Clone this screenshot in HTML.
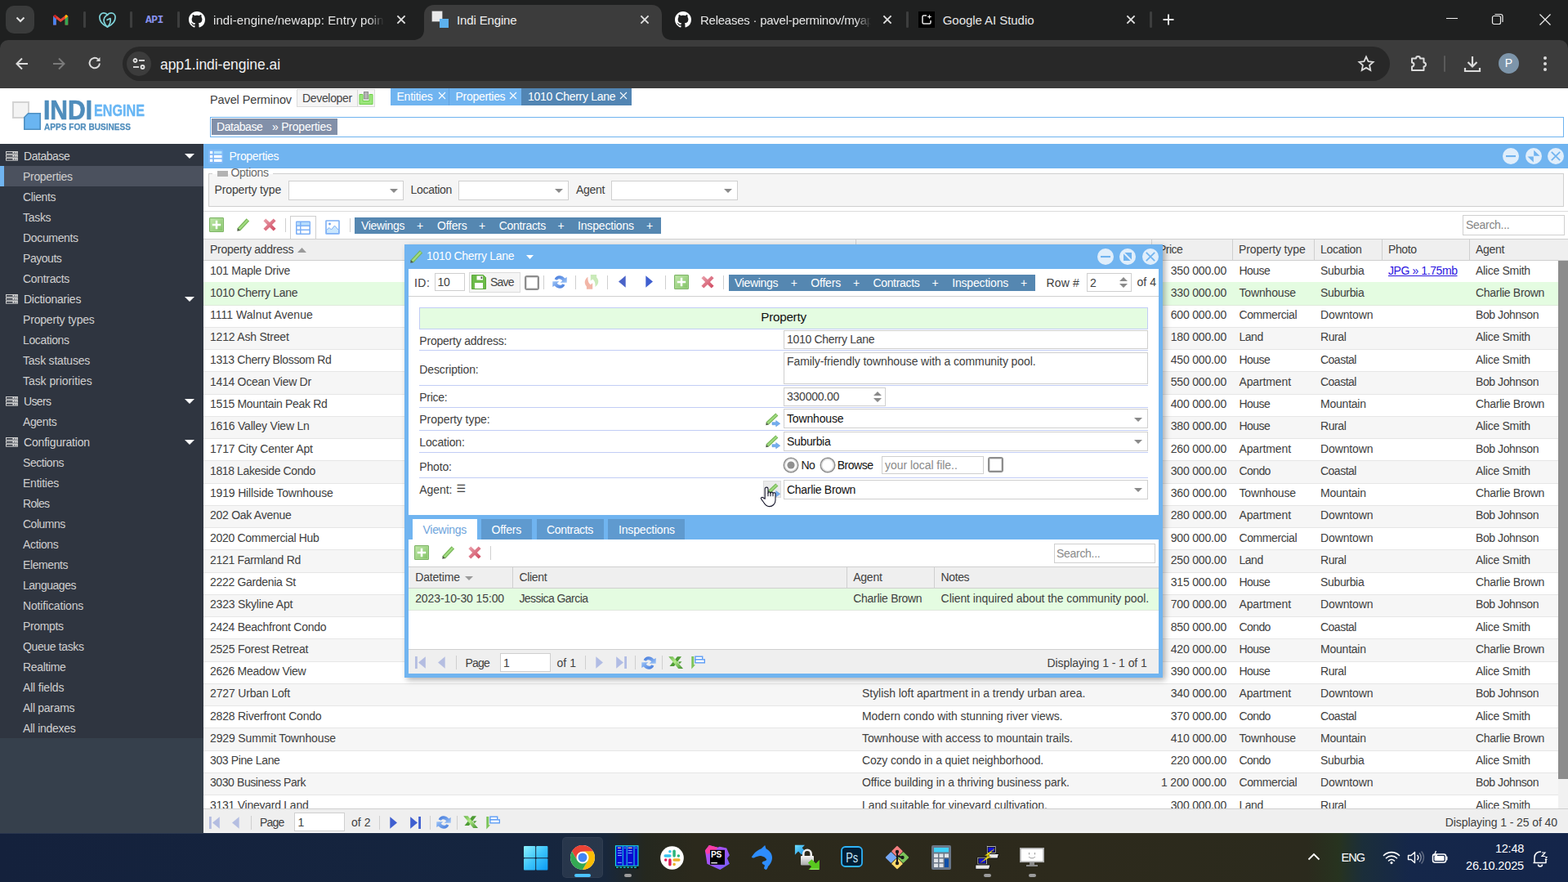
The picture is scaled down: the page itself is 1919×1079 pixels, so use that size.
<!DOCTYPE html>
<html lang="en">
<head>
<meta charset="utf-8">
<title>Indi Engine</title>
<style>
html,body{margin:0;padding:0}
body{width:1919px;height:1079px;overflow:hidden;background:#fff;position:relative;font-family:"Liberation Sans",sans-serif;font-size:14px;color:#404040}
.a{position:absolute}
.t{white-space:pre}
svg{display:block;overflow:visible}
</style>
</head>
<body>
<!-- Browser chrome -->
<div class="a" style="left:0;top:0;width:1919px;height:108px;background:#1f2020"></div>
<div class="a" style="left:0;top:49px;width:1919px;height:59px;background:#3c3c3c;border-radius:10px 10px 0 0"></div>
<div class="a" style="left:7px;top:7px;width:35px;height:34px;background:#3a3b3b;border-radius:10px"></div>
<svg class="a" style="left:17px;top:17px" width="16" height="14" viewBox="0 0 16 14"><path d="M3.5 4.5L8 9l4.5-4.5" stroke="#e3e3e3" stroke-width="2" fill="none"/></svg>
<svg class="a" style="left:64.800px;top:16.500px" width="18.400" height="14.500" viewBox="0 0 20 16"><path d="M0 15V3l2.5-2L10 7l7.5-6L20 3v12h-4V6.5L10 11 4 6.5V15z" fill="#ea4335"/><path d="M0 3v12h4V6.5z" fill="#4285f4"/><path d="M20 3v12h-4V6.5z" fill="#34a853"/><path d="M16 6.5L20 3 17.5 1 16 2.2z" fill="#fbbc04"/><path d="M4 6.5L0 3l2.500-2L4 2.200z" fill="#c5221f"/></svg>
<div class="a" style="left:102px;top:13.500px;width:2.600px;height:20px;background:#3d3e3e;border-radius:1.300px"></div>
<div class="a" style="left:159px;top:13.500px;width:2.600px;height:20px;background:#3d3e3e;border-radius:1.300px"></div>
<div class="a" style="left:217px;top:13.500px;width:2.600px;height:20px;background:#3d3e3e;border-radius:1.300px"></div>
<div class="a" style="left:1109px;top:13.500px;width:2.600px;height:20px;background:#3d3e3e;border-radius:1.300px"></div>
<div class="a" style="left:1407px;top:13.500px;width:2.600px;height:20px;background:#3d3e3e;border-radius:1.300px"></div>
<svg class="a" style="left:120.500px;top:14.500px" width="21" height="19" viewBox="0 0 21 19"><g fill="none" stroke="#7fd3d9" stroke-width="1.700" stroke-linejoin="round" stroke-linecap="round"><path d="M10.500 18C5 15.500 .9 11 .9 6.300C.9 3 3.300 .9 6 .9C8 .9 9.600 1.900 10.500 3.300C11.400 1.900 13 .9 15 .9C17.700 .9 20.100 3 20.100 6.300C20.100 11 16 15.500 10.500 18z"/><path d="M10.500 3.300C7.500 4.500 5.300 8 6.300 11.500C7 14 8.800 16.500 10.500 18C13.500 15 14.800 11.500 14 7.500L10.200 9.300"/></g></svg>
<div class="a" style="left:178px;top:17px;width:24px;height:16px;line-height:16px;font:bold 13px 'Liberation Mono',monospace;color:#8a93f0;letter-spacing:-0.5px">API</div>
<svg class="a" style="left:231px;top:14px" width="20" height="20" viewBox="0 0 16 16"><path fill="#fff" d="M8 0C3.58 0 0 3.58 0 8c0 3.54 2.29 6.53 5.47 7.59.4.07.55-.17.55-.38 0-.19-.01-.82-.01-1.49-2.01.37-2.53-.49-2.69-.94-.09-.23-.48-.94-.82-1.13-.28-.15-.68-.52-.01-.53.63-.01 1.08.58 1.23.82.72 1.21 1.87.87 2.33.66.07-.52.28-.87.51-1.07-1.78-.2-3.64-.89-3.64-3.95 0-.87.31-1.59.82-2.15-.08-.2-.36-1.02.08-2.12 0 0 .67-.21 2.2.82.64-.18 1.32-.27 2-.27s1.36.09 2 .27c1.53-1.04 2.2-.82 2.2-.82.44 1.1.16 1.92.08 2.12.51.56.82 1.27.82 2.15 0 3.07-1.87 3.75-3.65 3.95.29.25.54.73.54 1.48 0 1.07-.01 1.93-.01 2.2 0 .21.15.46.55.38A8.01 8.01 0 0 0 16 8c0-4.42-3.58-8-8-8z"/></svg>
<div class="a t" style="top:15px;line-height:20px;letter-spacing:0.092px;font-size:15px;color:#e6e6e6;left:261px;width:210px;overflow:hidden;-webkit-mask-image:linear-gradient(90deg,#000 190px,transparent 209px);mask-image:linear-gradient(90deg,#000 190px,transparent 209px);">indi-engine/newapp: Entry point</div>
<svg class="a" style="left:483px;top:16px" width="16" height="16" viewBox="-8 -8 16 16"><path d="M-4.6 -4.6L4.6 4.6M4.6 -4.6L-4.6 4.6" stroke="#e3e3e3" stroke-width="1.8" fill="none"/></svg>
<svg class="a" style="left:505px;top:6px" width="318" height="43" viewBox="0 0 318 43"><path d="M0 43C9 43 14 38 14 30V12C14 5 19 0 26 0H293C300 0 305 5 305 12V30C305 38 309 43 318 43z" fill="#3c3c3c"/></svg>
<div class="a" style="left:529px;top:14px;width:12px;height:12px;background:#e9e9e9;box-shadow:0 0 0 0.5px #bbb"></div>
<div class="a" style="left:538px;top:23px;width:11px;height:11px;background:#5db1ee"></div>
<div class="a t" style="top:15px;line-height:20px;letter-spacing:-0.142px;font-size:15px;color:#f0f0f0;left:559px;">Indi Engine</div>
<svg class="a" style="left:781px;top:16px" width="16" height="16" viewBox="-8 -8 16 16"><path d="M-4.6 -4.6L4.6 4.6M4.6 -4.6L-4.6 4.6" stroke="#e3e3e3" stroke-width="1.8" fill="none"/></svg>
<svg class="a" style="left:826px;top:14px" width="20" height="20" viewBox="0 0 16 16"><path fill="#fff" d="M8 0C3.58 0 0 3.58 0 8c0 3.54 2.29 6.53 5.47 7.59.4.07.55-.17.55-.38 0-.19-.01-.82-.01-1.49-2.01.37-2.53-.49-2.69-.94-.09-.23-.48-.94-.82-1.13-.28-.15-.68-.52-.01-.53.63-.01 1.08.58 1.23.82.72 1.21 1.87.87 2.33.66.07-.52.28-.87.51-1.07-1.78-.2-3.64-.89-3.64-3.95 0-.87.31-1.59.82-2.15-.08-.2-.36-1.02.08-2.12 0 0 .67-.21 2.2.82.64-.18 1.32-.27 2-.27s1.36.09 2 .27c1.53-1.04 2.2-.82 2.2-.82.44 1.1.16 1.92.08 2.12.51.56.82 1.27.82 2.15 0 3.07-1.87 3.75-3.65 3.95.29.25.54.73.54 1.48 0 1.07-.01 1.93-.01 2.2 0 .21.15.46.55.38A8.01 8.01 0 0 0 16 8c0-4.42-3.58-8-8-8z"/></svg>
<div class="a t" style="top:15px;line-height:20px;letter-spacing:-0.245px;font-size:15px;color:#e6e6e6;left:857px;width:210px;overflow:hidden;-webkit-mask-image:linear-gradient(90deg,#000 190px,transparent 209px);mask-image:linear-gradient(90deg,#000 190px,transparent 209px);">Releases · pavel-perminov/myapp</div>
<svg class="a" style="left:1078px;top:16px" width="16" height="16" viewBox="-8 -8 16 16"><path d="M-4.6 -4.6L4.6 4.6M4.6 -4.6L-4.6 4.6" stroke="#e3e3e3" stroke-width="1.8" fill="none"/></svg>
<div class="a" style="left:1124px;top:14px;width:20px;height:20px;background:#000"></div>
<svg class="a" style="left:1124px;top:14px" width="20" height="20" viewBox="0 0 20 20"><path d="M10 5H6.500C5.500 5 5 5.500 5 6.500v7c0 1 .5 1.500 1.500 1.500h7c1 0 1.500-.5 1.500-1.500V11" fill="none" stroke="#e8e8e8" stroke-width="1.500"/><path d="M13.500 3.500l.8 2.200 2.200.8-2.200.8-.8 2.200-.8-2.200-2.200-.8 2.200-.8z" fill="#e8e8e8"/></svg>
<div class="a t" style="top:15px;line-height:20px;letter-spacing:-0.053px;font-size:15px;color:#e6e6e6;left:1153.75px;">Google AI Studio</div>
<svg class="a" style="left:1376px;top:16px" width="16" height="16" viewBox="-8 -8 16 16"><path d="M-4.6 -4.6L4.6 4.6M4.6 -4.6L-4.6 4.6" stroke="#e3e3e3" stroke-width="1.8" fill="none"/></svg>
<svg class="a" style="left:1422px;top:16px" width="16" height="16" viewBox="0 0 16 16"><path d="M8 1.500v13M1.500 8h13" stroke="#e3e3e3" stroke-width="2"/></svg>
<div class="a" style="left:1770px;top:22px;width:14px;height:1px;background:#f0f0f0"></div>
<svg class="a" style="left:1825px;top:16px" width="16" height="16" viewBox="0 0 16 16"><rect x="1.500" y="3.500" width="10" height="10" rx="2" fill="none" stroke="#f0f0f0" stroke-width="1.200"/><path d="M4.500 1.500H11.500Q14 1.500 14 4V11" fill="none" stroke="#f0f0f0" stroke-width="1.200"/></svg>
<svg class="a" style="left:1883px;top:16px" width="16" height="16" viewBox="0 0 16 16"><path d="M1.500 1.500l13 13M14.500 1.500l-13 13" stroke="#f0f0f0" stroke-width="1.200"/></svg>
<svg class="a" style="left:17px;top:68px" width="20" height="20" viewBox="0 0 20 20"><path d="M17 10H3.500M10 3.500L3.500 10l6.500 6.500" stroke="#dcdcdc" stroke-width="2" fill="none"/></svg>
<svg class="a" style="left:62px;top:68px" width="20" height="20" viewBox="0 0 20 20"><path d="M3 10h13.500M10 3.500l6.500 6.500-6.500 6.500" stroke="#7a7a7a" stroke-width="2" fill="none"/></svg>
<svg class="a" style="left:106px;top:67px" width="20" height="20" viewBox="0 0 20 20"><path d="M16 10.500a6.200 6.200 0 1 1-2-5" stroke="#dcdcdc" stroke-width="2" fill="none"/><path d="M16.500 3v5h-5z" fill="#dcdcdc"/></svg>
<div class="a" style="left:150px;top:57px;width:1551px;height:42px;background:#282828;border-radius:21px"></div>
<div class="a" style="left:155px;top:63px;width:30px;height:30px;background:#3c3c3c;border-radius:15px"></div>
<svg class="a" style="left:161px;top:69px" width="18" height="18" viewBox="0 0 18 18"><g stroke="#e3e3e3" stroke-width="1.800" fill="none"><circle cx="4.500" cy="5" r="2"/><path d="M9 5h7"/><circle cx="13.500" cy="13" r="2"/><path d="M2 13h7"/></g></svg>
<div class="a t" style="top:67px;line-height:24px;letter-spacing:-0.048px;font-size:17.5px;color:#f1f1f1;left:196px;">app1.indi-engine.ai</div>
<svg class="a" style="left:1661px;top:67px" width="22" height="22" viewBox="0 0 22 22"><path d="M11 2.500l2.600 5.600 6 .7-4.500 4.100 1.200 6-5.300-3-5.300 3 1.200-6L2.400 8.800l6-.7z" fill="none" stroke="#dcdcdc" stroke-width="1.800" stroke-linejoin="miter"/></svg>
<svg class="a" style="left:1724px;top:66px" width="24" height="24" viewBox="0 0 24 24"><path d="M4 5.500h5a2.500 2.500 0 0 1 5 0h4.500v5a2.500 2.500 0 0 1 0 5V20H4v-4.500a2.500 2.500 0 0 0 0-5z" fill="none" stroke="#dcdcdc" stroke-width="2" stroke-linejoin="round"/></svg>
<div class="a" style="left:1767px;top:68px;width:2px;height:20px;background:#5a5a5a;border-radius:1px"></div>
<svg class="a" style="left:1790px;top:66px" width="24" height="24" viewBox="0 0 24 24"><path d="M12 3v12M6.500 10l5.500 5.500 5.500-5.500M3 17v4h18v-4" fill="none" stroke="#dcdcdc" stroke-width="2.200"/></svg>
<div class="a" style="left:1834px;top:65px;width:25px;height:25px;border-radius:13px;background:#7d95aa;color:#fff;font-size:14px;line-height:25px;text-align:center">P</div>
<div class="a" style="left:1889px;top:69px;width:4px;height:4px;border-radius:2px;background:#dcdcdc"></div>
<div class="a" style="left:1889px;top:76px;width:4px;height:4px;border-radius:2px;background:#dcdcdc"></div>
<div class="a" style="left:1889px;top:83px;width:4px;height:4px;border-radius:2px;background:#dcdcdc"></div>
<!-- App header -->
<div class="a" style="left:15px;top:124px;width:17px;height:17px;border:2px solid #d3d3d3;background:#f3f3f3"></div>
<svg class="a" style="left:29px;top:138px" width="21" height="21" viewBox="0 0 21 21"><path d="M5.500 .8H20.200V20.200H.8V5.500z" fill="#6ab5f1" stroke="#4f90c2" stroke-width="1.600"/></svg>
<div class="a" style="left:53.4px;top:118.03px;font-size:33.52px;line-height:33.52px;font-weight:bold;color:#4f8dbc;white-space:nowrap;transform-origin:0 0;transform:scaleX(0.8955);-webkit-text-stroke:0.7px #4f8dbc">INDI</div>
<div class="a" style="left:114.9px;top:124.88px;font-size:20.11px;line-height:20.11px;font-weight:bold;color:#68b6f4;white-space:nowrap;transform-origin:0 0;transform:scaleX(0.8041);-webkit-text-stroke:0.4px #68b6f4">ENGINE</div>
<div class="a" style="left:53.8px;top:149.84px;font-size:11.17px;line-height:11.17px;font-weight:bold;color:#4f8dbc;white-space:nowrap;transform-origin:0 0;transform:scaleX(0.9047);-webkit-text-stroke:0.25px #4f8dbc">APPS FOR BUSINESS</div>
<div class="a t" style="top:112px;line-height:20px;letter-spacing:-0.11px;font-size:14.5px;left:257px;">Pavel Perminov</div>
<div class="a" style="left:363px;top:109px;width:96px;height:22px;border:1px solid #dcdcdc;background:#f5f5f5;box-sizing:border-box"></div>
<div class="a" style="left:437px;top:110px;width:1px;height:20px;background:#d6d6d6"></div>
<div class="a t" style="top:111px;line-height:18px;letter-spacing:-0.33px;color:#444;left:370px;">Developer</div>
<svg class="a" style="left:439px;top:111px" width="18" height="18" viewBox="0 0 18 18"><path d="M1 4.500h4v8h8v-8h4V16.500H1z" fill="#9be57c" stroke="#6fd048" stroke-width="1"/><rect x="6.500" y="1.500" width="5" height="8.500" fill="#b4b4b4" stroke="#8e8e8e" stroke-width="1"/></svg>
<div class="a" style="left:478px;top:108px;width:160px;height:21px;background:#70b4f0"></div>
<div class="a" style="left:549px;top:108px;width:1px;height:21px;background:#62a3e0"></div>
<div class="a" style="left:638px;top:108px;width:135px;height:21px;background:#5285b3"></div>
<div class="a t" style="top:109px;line-height:18px;letter-spacing:-0.228px;color:#fff;left:485.5px;">Entities</div>
<svg class="a" style="left:534.7px;top:111px" width="12" height="12" viewBox="-6 -6 12 12"><path d="M-4 -4L4 4M4 -4L-4 4" stroke="#fff" stroke-width="1.100" fill="none"/></svg>
<div class="a t" style="top:109px;line-height:18px;letter-spacing:-0.309px;color:#fff;left:557.6px;">Properties</div>
<svg class="a" style="left:622px;top:111px" width="12" height="12" viewBox="-6 -6 12 12"><path d="M-4 -4L4 4M4 -4L-4 4" stroke="#fff" stroke-width="1.100" fill="none"/></svg>
<div class="a t" style="top:109px;line-height:18px;letter-spacing:-0.307px;color:#fff;left:646px;">1010 Cherry Lane</div>
<svg class="a" style="left:757px;top:111px" width="12" height="12" viewBox="-6 -6 12 12"><path d="M-4 -4L4 4M4 -4L-4 4" stroke="#fff" stroke-width="1.100" fill="none"/></svg>
<div class="a" style="left:257px;top:143px;width:1657px;height:25px;border:1px solid #6fb3ef;box-sizing:border-box;background:#fff"></div>
<div class="a" style="left:259px;top:145px;width:154px;height:20px;background:#8290a9"></div>
<div class="a t" style="top:146px;line-height:18px;letter-spacing:-0.447px;color:#fff;left:265px;">Database</div>
<div class="a t" style="top:146px;line-height:18px;letter-spacing:-0.219px;color:#fff;left:333px;">» Properties</div>
<!-- Sidebar -->
<div class="a" style="left:0;top:176px;width:249px;height:727px;background:#2f3540"></div>
<div class="a" style="left:0;top:903px;width:249px;height:117px;background:#36404c"></div>
<svg class="a" style="left:7px;top:184.5px" width="15" height="12" viewBox="0 0 15 12"><g fill="none" stroke="#cfcfcf" stroke-width="1"><rect x=".5" y=".5" width="14" height="2.600"/><rect x=".5" y="4.500" width="14" height="2.600"/><rect x=".5" y="8.500" width="14" height="2.600"/></g><g fill="#e4e4e4"><rect x="8.500" y="1" width="2" height="1.600"/><rect x="11.500" y="1" width="2" height="1.600"/><rect x="8.500" y="5" width="2" height="1.600"/><rect x="11.500" y="5" width="2" height="1.600"/><rect x="8.500" y="9" width="2" height="1.600"/><rect x="11.500" y="9" width="2" height="1.600"/></g></svg>
<div class="a t" style="top:182px;line-height:18px;letter-spacing:-0.447px;color:#d4d4d4;left:29px;">Database</div>
<svg class="a" style="left:226px;top:187.5px" width="12" height="6" viewBox="0 0 12 6"><path d="M0 0H12L6 6z" fill="#fff"/></svg>
<div class="a" style="left:0;top:203px;width:249px;height:25px;background:#4b515e"></div>
<div class="a" style="left:0;top:203px;width:5px;height:25px;background:#70b4f0"></div>
<div class="a t" style="top:207px;line-height:18px;letter-spacing:-0.309px;color:#cfcfcf;left:28px;">Properties</div>
<div class="a t" style="top:232px;line-height:18px;letter-spacing:-0.389px;color:#cfcfcf;left:28px;">Clients</div>
<div class="a t" style="top:257px;line-height:18px;letter-spacing:-0.296px;color:#cfcfcf;left:28px;">Tasks</div>
<div class="a t" style="top:282px;line-height:18px;letter-spacing:-0.339px;color:#cfcfcf;left:28px;">Documents</div>
<div class="a t" style="top:307px;line-height:18px;letter-spacing:-0.462px;color:#cfcfcf;left:28px;">Payouts</div>
<div class="a t" style="top:332px;line-height:18px;letter-spacing:-0.321px;color:#cfcfcf;left:28px;">Contracts</div>
<svg class="a" style="left:7px;top:360px" width="15" height="12" viewBox="0 0 15 12"><g fill="none" stroke="#cfcfcf" stroke-width="1"><rect x=".5" y=".5" width="14" height="2.600"/><rect x=".5" y="4.500" width="14" height="2.600"/><rect x=".5" y="8.500" width="14" height="2.600"/></g><g fill="#e4e4e4"><rect x="8.500" y="1" width="2" height="1.600"/><rect x="11.500" y="1" width="2" height="1.600"/><rect x="8.500" y="5" width="2" height="1.600"/><rect x="11.500" y="5" width="2" height="1.600"/><rect x="8.500" y="9" width="2" height="1.600"/><rect x="11.500" y="9" width="2" height="1.600"/></g></svg>
<div class="a t" style="top:357px;line-height:18px;letter-spacing:-0.25px;color:#d4d4d4;left:29px;">Dictionaries</div>
<svg class="a" style="left:226px;top:363px" width="12" height="6" viewBox="0 0 12 6"><path d="M0 0H12L6 6z" fill="#fff"/></svg>
<div class="a t" style="top:382px;line-height:18px;letter-spacing:-0.186px;color:#cfcfcf;left:28px;">Property types</div>
<div class="a t" style="top:407px;line-height:18px;letter-spacing:-0.361px;color:#cfcfcf;left:28px;">Locations</div>
<div class="a t" style="top:432px;line-height:18px;letter-spacing:-0.213px;color:#cfcfcf;left:28px;">Task statuses</div>
<div class="a t" style="top:457px;line-height:18px;letter-spacing:-0.06px;color:#cfcfcf;left:28px;">Task priorities</div>
<svg class="a" style="left:7px;top:485px" width="15" height="12" viewBox="0 0 15 12"><g fill="none" stroke="#cfcfcf" stroke-width="1"><rect x=".5" y=".5" width="14" height="2.600"/><rect x=".5" y="4.500" width="14" height="2.600"/><rect x=".5" y="8.500" width="14" height="2.600"/></g><g fill="#e4e4e4"><rect x="8.500" y="1" width="2" height="1.600"/><rect x="11.500" y="1" width="2" height="1.600"/><rect x="8.500" y="5" width="2" height="1.600"/><rect x="11.500" y="5" width="2" height="1.600"/><rect x="8.500" y="9" width="2" height="1.600"/><rect x="11.500" y="9" width="2" height="1.600"/></g></svg>
<div class="a t" style="top:482px;line-height:18px;letter-spacing:-0.635px;color:#d4d4d4;left:29px;">Users</div>
<svg class="a" style="left:226px;top:488px" width="12" height="6" viewBox="0 0 12 6"><path d="M0 0H12L6 6z" fill="#fff"/></svg>
<div class="a t" style="top:507px;line-height:18px;letter-spacing:-0.375px;color:#cfcfcf;left:28px;">Agents</div>
<svg class="a" style="left:7px;top:535px" width="15" height="12" viewBox="0 0 15 12"><g fill="none" stroke="#cfcfcf" stroke-width="1"><rect x=".5" y=".5" width="14" height="2.600"/><rect x=".5" y="4.500" width="14" height="2.600"/><rect x=".5" y="8.500" width="14" height="2.600"/></g><g fill="#e4e4e4"><rect x="8.500" y="1" width="2" height="1.600"/><rect x="11.500" y="1" width="2" height="1.600"/><rect x="8.500" y="5" width="2" height="1.600"/><rect x="11.500" y="5" width="2" height="1.600"/><rect x="8.500" y="9" width="2" height="1.600"/><rect x="11.500" y="9" width="2" height="1.600"/></g></svg>
<div class="a t" style="top:532px;line-height:18px;letter-spacing:-0.181px;color:#d4d4d4;left:29px;">Configuration</div>
<svg class="a" style="left:226px;top:538px" width="12" height="6" viewBox="0 0 12 6"><path d="M0 0H12L6 6z" fill="#fff"/></svg>
<div class="a t" style="top:557px;line-height:18px;letter-spacing:-0.452px;color:#cfcfcf;left:28px;">Sections</div>
<div class="a t" style="top:582px;line-height:18px;letter-spacing:-0.228px;color:#cfcfcf;left:28px;">Entities</div>
<div class="a t" style="top:607px;line-height:18px;letter-spacing:-0.674px;color:#cfcfcf;left:28px;">Roles</div>
<div class="a t" style="top:632px;line-height:18px;letter-spacing:-0.503px;color:#cfcfcf;left:28px;">Columns</div>
<div class="a t" style="top:657px;line-height:18px;letter-spacing:-0.354px;color:#cfcfcf;left:28px;">Actions</div>
<div class="a t" style="top:682px;line-height:18px;letter-spacing:-0.406px;color:#cfcfcf;left:28px;">Elements</div>
<div class="a t" style="top:707px;line-height:18px;letter-spacing:-0.478px;color:#cfcfcf;left:28px;">Languages</div>
<div class="a t" style="top:732px;line-height:18px;letter-spacing:-0.16px;color:#cfcfcf;left:28px;">Notifications</div>
<div class="a t" style="top:757px;line-height:18px;letter-spacing:-0.344px;color:#cfcfcf;left:28px;">Prompts</div>
<div class="a t" style="top:782px;line-height:18px;letter-spacing:-0.369px;color:#cfcfcf;left:28px;">Queue tasks</div>
<div class="a t" style="top:807px;line-height:18px;letter-spacing:-0.344px;color:#cfcfcf;left:28px;">Realtime</div>
<div class="a t" style="top:832px;line-height:18px;letter-spacing:-0.185px;color:#cfcfcf;left:28px;">All fields</div>
<div class="a t" style="top:857px;line-height:18px;letter-spacing:-0.285px;color:#cfcfcf;left:28px;">All params</div>
<div class="a t" style="top:882px;line-height:18px;letter-spacing:-0.294px;color:#cfcfcf;left:28px;">All indexes</div>
<!-- Main panel -->
<div class="a" style="left:249px;top:176px;width:1670px;height:30px;background:#70b4f0"></div>
<svg class="a" style="left:255px;top:183px" width="18" height="17" viewBox="0 0 18 17"><rect x=".4" y=".4" width="17.200" height="16.200" rx="1" fill="#7db6f7" stroke="#86bbf6" stroke-width=".8"/><g fill="#fff"><rect x="1.900" y="1.900" width="3.300" height="3.200"/><rect x="6.900" y="1.900" width="9.600" height="3.200" fill="#b6e6fe"/><rect x="1.900" y="6.800" width="3.300" height="3.300"/><rect x="6.900" y="6.800" width="9.600" height="3.300"/><rect x="1.900" y="11.700" width="3.300" height="3.300"/><rect x="6.900" y="11.700" width="9.600" height="3.300"/></g></svg>
<div class="a t" style="top:181px;line-height:20px;letter-spacing:-0.309px;color:#fff;left:280.5px;">Properties</div>
<svg class="a" style="left:1838px;top:180px" width="22" height="22" viewBox="-11 -11 22 22"><circle r="10" fill="#e0eefb"/><rect x="-6" y="-1" width="12" height="2.100" fill="#70b3ef"/></svg>
<svg class="a" style="left:1866px;top:180px" width="22" height="22" viewBox="-11 -11 22 22"><circle r="10" fill="#e0eefb"/><path d="M.2 -7.300L7.500 -.2H.2zM-7.500 .5H-.2V7.600z" fill="#70b3ef"/></svg>
<svg class="a" style="left:1893px;top:180px" width="22" height="22" viewBox="-11 -11 22 22"><circle r="10" fill="#e0eefb"/><path d="M-5.200 -5.200L5.200 5.200M5.200 -5.200L-5.200 5.200" stroke="#70b3ef" stroke-width="1.700" fill="none"/></svg>
<div class="a" style="left:255px;top:212px;width:1659px;height:41px;border:1px solid #cfcfcf;background:#f5f5f5;box-sizing:border-box"></div>
<div class="a" style="left:260px;top:206px;width:74px;height:10px;background:#fff"></div>
<div class="a" style="left:260px;top:213px;width:74px;height:5px;background:#f5f5f5"></div>
<div class="a" style="left:266px;top:209px;width:13px;height:7px;background:#b3b3b3"></div>
<div class="a t" style="top:202px;line-height:18px;letter-spacing:-0.293px;color:#6a6a6a;left:282.5px;">Options</div>
<div class="a t" style="top:223px;line-height:18px;letter-spacing:-0.133px;left:262.5px;">Property type</div>
<div class="a" style="left:353px;top:221px;width:141px;height:24px;border:1px solid #cfcfcf;background:#fff;box-sizing:border-box"></div><svg class="a" style="left:476.5px;top:231px" width="10" height="5" viewBox="0 0 10 5"><path d="M0 0H10L5.0 5z" fill="#8a8a8a"/></svg>
<div class="a t" style="top:223px;line-height:18px;letter-spacing:-0.296px;left:502.5px;">Location</div>
<div class="a" style="left:561px;top:221px;width:135px;height:24px;border:1px solid #cfcfcf;background:#fff;box-sizing:border-box"></div><svg class="a" style="left:678.5px;top:231px" width="10" height="5" viewBox="0 0 10 5"><path d="M0 0H10L5.0 5z" fill="#8a8a8a"/></svg>
<div class="a t" style="top:223px;line-height:18px;letter-spacing:-0.274px;left:705px;">Agent</div>
<div class="a" style="left:748px;top:221px;width:155px;height:24px;border:1px solid #cfcfcf;background:#fff;box-sizing:border-box"></div><svg class="a" style="left:885.5px;top:231px" width="10" height="5" viewBox="0 0 10 5"><path d="M0 0H10L5.0 5z" fill="#8a8a8a"/></svg>
<div class="a" style="left:249px;top:258px;width:1670px;height:1px;background:#dcdcdc"></div>
<svg class="a" style="left:256px;top:266px" width="18" height="18" viewBox="0 0 18 18"><defs><linearGradient id="ga1" x1="0" y1="0" x2="1" y2="1"><stop offset="0" stop-color="#c4eaae"/><stop offset="1" stop-color="#7fc062"/></linearGradient></defs><rect x=".5" y=".5" width="17" height="17" rx=".5" fill="url(#ga1)" stroke="#7db465"/><rect x="1.500" y="1.500" width="15" height="15" fill="none" stroke="#a9d993" stroke-width="1" opacity=".7"/><path d="M9 3.800v10.400M3.800 9h10.400" stroke="#fff" stroke-width="2.500"/></svg>
<svg class="a" style="left:290px;top:267px" width="16" height="16" viewBox="0 0 16 16"><path d="M2.200 13.800L13.400 1.900" stroke="#76b455" stroke-width="4.600" stroke-linecap="butt"/><path d="M2.500 13.500L13.100 2.200" stroke="#a2dc82" stroke-width="2.400"/><path d="M.3 15.700l.4-3.800 3.300 3z" fill="#4c5a44"/></svg>
<svg class="a" style="left:322px;top:267px" width="16" height="16" viewBox="0 0 16 16"><defs><linearGradient id="gd2" x1="0" y1="0" x2="1" y2="1"><stop offset="0" stop-color="#eaa6b0"/><stop offset="1" stop-color="#cf445c"/></linearGradient></defs><path d="M3.300 .4L8 5.100 12.700 .4 15.600 3.300 10.900 8 15.600 12.700 12.700 15.600 8 10.900 3.300 15.600 .4 12.700 5.100 8 .4 3.300z" fill="url(#gd2)"/></svg>
<div class="a" style="left:349px;top:267px;width:1px;height:17px;background:#cfcfcf"></div>
<div class="a" style="left:355px;top:264px;width:32px;height:29px;border:1px solid #cfcfcf;border-bottom:0;background:#fff;box-sizing:border-box"></div>
<svg class="a" style="left:362px;top:270px" width="18" height="18" viewBox="0 0 18 18"><rect x=".8" y="1.300" width="16.400" height="15" rx=".5" fill="#fff" stroke="#7db0f6" stroke-width="1.600"/><rect x="1.600" y="2.100" width="14.800" height="3.800" fill="#b4dcfd"/><path d="M1 6.300h16M1 11.300h16M5.800 1.500v14.500" stroke="#7db0f6" stroke-width="1.500" fill="none"/></svg>
<svg class="a" style="left:398px;top:269px" width="18" height="18" viewBox="0 0 18 18"><rect x="1" y="1" width="16" height="16" rx=".5" fill="#fff" stroke="#7db0f6" stroke-width="1.600"/><path d="M1.500 12.500l3.500-3 2.500 2.500 4-5 5 5.500V16.500H1.500z" fill="#c9e6fd" stroke="#7db0f6" stroke-width="1"/><circle cx="5.500" cy="5" r="1.400" fill="#6fa4f0"/></svg>
<div class="a" style="left:428px;top:267px;width:1px;height:17px;background:#cfcfcf"></div>
<div class="a" style="left:434px;top:266px;width:374.5px;height:20px;background:#5587b1"></div><div class="a t" style="top:266px;line-height:20px;letter-spacing:-0.32px;color:#fff;left:442px;">Viewings</div><div class="a t" style="top:266px;line-height:20px;letter-spacing:1.786px;color:#fff;left:510.013px;">+</div><div class="a t" style="top:266px;line-height:20px;letter-spacing:-0.207px;color:#fff;left:535px;">Offers</div><div class="a t" style="top:266px;line-height:20px;letter-spacing:1.786px;color:#fff;left:586.013px;">+</div><div class="a t" style="top:266px;line-height:20px;letter-spacing:-0.321px;color:#fff;left:610.8px;">Contracts</div><div class="a t" style="top:266px;line-height:20px;letter-spacing:1.786px;color:#fff;left:682.513px;">+</div><div class="a t" style="top:266px;line-height:20px;letter-spacing:-0.174px;color:#fff;left:707px;">Inspections</div><div class="a t" style="top:266px;line-height:20px;letter-spacing:1.786px;color:#fff;left:791.013px;">+</div>
<div class="a" style="left:1790px;top:263px;width:125px;height:25px;border:1px solid #cfcfcf;background:#fff;box-sizing:border-box"></div>
<div class="a t" style="top:266px;line-height:18px;letter-spacing:-0.294px;color:#858585;left:1794px;">Search...</div>
<div class="a" style="left:249px;top:292px;width:1670px;height:27px;background:#efefef;border-top:1px solid #cfcfcf;border-bottom:1px solid #cfcfcf;box-sizing:border-box"></div>
<div class="a t" style="top:296px;line-height:18px;letter-spacing:-0.282px;left:257px;">Property address</div>
<div class="a" style="left:1047px;top:293px;width:1px;height:25px;background:#cfcfcf"></div>
<div class="a t" style="top:296px;line-height:18px;letter-spacing:-0.24px;left:1055px;">Description</div>
<div class="a" style="left:1409px;top:293px;width:1px;height:25px;background:#cfcfcf"></div>
<div class="a t" style="top:296px;line-height:18px;letter-spacing:-0.548px;left:1418px;">Price</div>
<div class="a" style="left:1508px;top:293px;width:1px;height:25px;background:#cfcfcf"></div>
<div class="a t" style="top:296px;line-height:18px;letter-spacing:-0.133px;left:1516px;">Property type</div>
<div class="a" style="left:1608px;top:293px;width:1px;height:25px;background:#cfcfcf"></div>
<div class="a t" style="top:296px;line-height:18px;letter-spacing:-0.296px;left:1616px;">Location</div>
<div class="a" style="left:1691px;top:293px;width:1px;height:25px;background:#cfcfcf"></div>
<div class="a t" style="top:296px;line-height:18px;letter-spacing:-0.387px;left:1699px;">Photo</div>
<div class="a" style="left:1798px;top:293px;width:1px;height:25px;background:#cfcfcf"></div>
<div class="a t" style="top:296px;line-height:18px;letter-spacing:-0.274px;left:1806px;">Agent</div>
<svg class="a" style="left:364px;top:302.500px" width="11" height="6" viewBox="0 0 11 6"><path d="M0 6H11L5.500 0z" fill="#9a9a9a"/></svg>
<div class="a" style="left:249px;top:319px;width:1658px;height:670px;overflow:hidden;background:#fff">
<div class="a" style="left:0;top:0px;width:1658px;height:27px;background:#fff;border-bottom:1px solid #e6e6e6;box-sizing:border-box"></div>
<div class="a t" style="top:3px;line-height:18px;letter-spacing:-0.256px;left:8px;">101 Maple Drive</div>
<div class="a t" style="top:3px;line-height:18px;letter-spacing:-0.18px;left:1183.72px;">350 000.00</div>
<div class="a t" style="top:3px;line-height:18px;letter-spacing:-0.556px;left:1267.5px;">House</div>
<div class="a t" style="top:3px;line-height:18px;letter-spacing:-0.339px;left:1367px;">Suburbia</div>
<div class="a t" style="top:3px;line-height:18px;letter-spacing:-0.415px;color:#2a14e0;left:1450px;text-decoration:underline;">JPG » 1.75mb</div>
<div class="a t" style="top:3px;line-height:18px;letter-spacing:-0.294px;left:1557px;">Alice Smith</div>
<div class="a" style="left:0;top:26px;width:1658px;height:29px;background:#e4fce1;border-bottom:1px solid #dfeadb;box-sizing:border-box"></div>
<div class="a t" style="top:30px;line-height:18px;letter-spacing:-0.307px;left:8px;">1010 Cherry Lane</div>
<div class="a t" style="top:30px;line-height:18px;letter-spacing:-0.079px;left:806px;">Family-friendly townhouse with a community pool.</div>
<div class="a t" style="top:30px;line-height:18px;letter-spacing:-0.18px;left:1183.72px;">330 000.00</div>
<div class="a t" style="top:30px;line-height:18px;letter-spacing:-0.16px;left:1267.5px;">Townhouse</div>
<div class="a t" style="top:30px;line-height:18px;letter-spacing:-0.339px;left:1367px;">Suburbia</div>
<div class="a t" style="top:30px;line-height:18px;letter-spacing:-0.298px;left:1557px;">Charlie Brown</div>
<div class="a" style="left:0;top:55px;width:1658px;height:27px;background:#fff;border-bottom:1px solid #e6e6e6;box-sizing:border-box"></div>
<div class="a t" style="top:57px;line-height:18px;letter-spacing:0.027px;left:8px;">1111 Walnut Avenue</div>
<div class="a t" style="top:57px;line-height:18px;letter-spacing:-0.18px;left:1183.72px;">600 000.00</div>
<div class="a t" style="top:57px;line-height:18px;letter-spacing:-0.406px;left:1267.5px;">Commercial</div>
<div class="a t" style="top:57px;line-height:18px;letter-spacing:-0.123px;left:1367px;">Downtown</div>
<div class="a t" style="top:57px;line-height:18px;letter-spacing:-0.427px;left:1557px;">Bob Johnson</div>
<div class="a" style="left:0;top:82px;width:1658px;height:27px;background:#f6f6f6;border-bottom:1px solid #e6e6e6;box-sizing:border-box"></div>
<div class="a t" style="top:84px;line-height:18px;letter-spacing:-0.201px;left:8px;">1212 Ash Street</div>
<div class="a t" style="top:84px;line-height:18px;letter-spacing:-0.18px;left:1183.72px;">180 000.00</div>
<div class="a t" style="top:84px;line-height:18px;letter-spacing:-0.48px;left:1267.5px;">Land</div>
<div class="a t" style="top:84px;line-height:18px;letter-spacing:-0.411px;left:1367px;">Rural</div>
<div class="a t" style="top:84px;line-height:18px;letter-spacing:-0.294px;left:1557px;">Alice Smith</div>
<div class="a" style="left:0;top:109px;width:1658px;height:27px;background:#fff;border-bottom:1px solid #e6e6e6;box-sizing:border-box"></div>
<div class="a t" style="top:112px;line-height:18px;letter-spacing:-0.359px;left:8px;">1313 Cherry Blossom Rd</div>
<div class="a t" style="top:112px;line-height:18px;letter-spacing:-0.18px;left:1183.72px;">450 000.00</div>
<div class="a t" style="top:112px;line-height:18px;letter-spacing:-0.556px;left:1267.5px;">House</div>
<div class="a t" style="top:112px;line-height:18px;letter-spacing:-0.511px;left:1367px;">Coastal</div>
<div class="a t" style="top:112px;line-height:18px;letter-spacing:-0.294px;left:1557px;">Alice Smith</div>
<div class="a" style="left:0;top:136px;width:1658px;height:28px;background:#f6f6f6;border-bottom:1px solid #e6e6e6;box-sizing:border-box"></div>
<div class="a t" style="top:139px;line-height:18px;letter-spacing:-0.284px;left:8px;">1414 Ocean View Dr</div>
<div class="a t" style="top:139px;line-height:18px;letter-spacing:-0.18px;left:1183.72px;">550 000.00</div>
<div class="a t" style="top:139px;line-height:18px;letter-spacing:-0.129px;left:1267.5px;">Apartment</div>
<div class="a t" style="top:139px;line-height:18px;letter-spacing:-0.511px;left:1367px;">Coastal</div>
<div class="a t" style="top:139px;line-height:18px;letter-spacing:-0.427px;left:1557px;">Bob Johnson</div>
<div class="a" style="left:0;top:164px;width:1658px;height:27px;background:#fff;border-bottom:1px solid #e6e6e6;box-sizing:border-box"></div>
<div class="a t" style="top:166px;line-height:18px;letter-spacing:-0.32px;left:8px;">1515 Mountain Peak Rd</div>
<div class="a t" style="top:166px;line-height:18px;letter-spacing:-0.18px;left:1183.72px;">400 000.00</div>
<div class="a t" style="top:166px;line-height:18px;letter-spacing:-0.556px;left:1267.5px;">House</div>
<div class="a t" style="top:166px;line-height:18px;letter-spacing:-0.221px;left:1367px;">Mountain</div>
<div class="a t" style="top:166px;line-height:18px;letter-spacing:-0.298px;left:1557px;">Charlie Brown</div>
<div class="a" style="left:0;top:191px;width:1658px;height:27px;background:#f6f6f6;border-bottom:1px solid #e6e6e6;box-sizing:border-box"></div>
<div class="a t" style="top:193px;line-height:18px;letter-spacing:-0.204px;left:8px;">1616 Valley View Ln</div>
<div class="a t" style="top:193px;line-height:18px;letter-spacing:-0.18px;left:1183.72px;">380 000.00</div>
<div class="a t" style="top:193px;line-height:18px;letter-spacing:-0.556px;left:1267.5px;">House</div>
<div class="a t" style="top:193px;line-height:18px;letter-spacing:-0.411px;left:1367px;">Rural</div>
<div class="a t" style="top:193px;line-height:18px;letter-spacing:-0.294px;left:1557px;">Alice Smith</div>
<div class="a" style="left:0;top:218px;width:1658px;height:27px;background:#fff;border-bottom:1px solid #e6e6e6;box-sizing:border-box"></div>
<div class="a t" style="top:221px;line-height:18px;letter-spacing:-0.172px;left:8px;">1717 City Center Apt</div>
<div class="a t" style="top:221px;line-height:18px;letter-spacing:-0.18px;left:1183.72px;">260 000.00</div>
<div class="a t" style="top:221px;line-height:18px;letter-spacing:-0.129px;left:1267.5px;">Apartment</div>
<div class="a t" style="top:221px;line-height:18px;letter-spacing:-0.123px;left:1367px;">Downtown</div>
<div class="a t" style="top:221px;line-height:18px;letter-spacing:-0.427px;left:1557px;">Bob Johnson</div>
<div class="a" style="left:0;top:245px;width:1658px;height:28px;background:#f6f6f6;border-bottom:1px solid #e6e6e6;box-sizing:border-box"></div>
<div class="a t" style="top:248px;line-height:18px;letter-spacing:-0.384px;left:8px;">1818 Lakeside Condo</div>
<div class="a t" style="top:248px;line-height:18px;letter-spacing:-0.18px;left:1183.72px;">300 000.00</div>
<div class="a t" style="top:248px;line-height:18px;letter-spacing:-0.587px;left:1267.5px;">Condo</div>
<div class="a t" style="top:248px;line-height:18px;letter-spacing:-0.511px;left:1367px;">Coastal</div>
<div class="a t" style="top:248px;line-height:18px;letter-spacing:-0.294px;left:1557px;">Alice Smith</div>
<div class="a" style="left:0;top:273px;width:1658px;height:27px;background:#fff;border-bottom:1px solid #e6e6e6;box-sizing:border-box"></div>
<div class="a t" style="top:275px;line-height:18px;letter-spacing:-0.174px;left:8px;">1919 Hillside Townhouse</div>
<div class="a t" style="top:275px;line-height:18px;letter-spacing:-0.18px;left:1183.72px;">360 000.00</div>
<div class="a t" style="top:275px;line-height:18px;letter-spacing:-0.16px;left:1267.5px;">Townhouse</div>
<div class="a t" style="top:275px;line-height:18px;letter-spacing:-0.221px;left:1367px;">Mountain</div>
<div class="a t" style="top:275px;line-height:18px;letter-spacing:-0.298px;left:1557px;">Charlie Brown</div>
<div class="a" style="left:0;top:300px;width:1658px;height:27px;background:#f6f6f6;border-bottom:1px solid #e6e6e6;box-sizing:border-box"></div>
<div class="a t" style="top:302px;line-height:18px;letter-spacing:-0.271px;left:8px;">202 Oak Avenue</div>
<div class="a t" style="top:302px;line-height:18px;letter-spacing:-0.18px;left:1183.72px;">280 000.00</div>
<div class="a t" style="top:302px;line-height:18px;letter-spacing:-0.129px;left:1267.5px;">Apartment</div>
<div class="a t" style="top:302px;line-height:18px;letter-spacing:-0.123px;left:1367px;">Downtown</div>
<div class="a t" style="top:302px;line-height:18px;letter-spacing:-0.427px;left:1557px;">Bob Johnson</div>
<div class="a" style="left:0;top:327px;width:1658px;height:27px;background:#fff;border-bottom:1px solid #e6e6e6;box-sizing:border-box"></div>
<div class="a t" style="top:330px;line-height:18px;letter-spacing:-0.3px;left:8px;">2020 Commercial Hub</div>
<div class="a t" style="top:330px;line-height:18px;letter-spacing:-0.18px;left:1183.72px;">900 000.00</div>
<div class="a t" style="top:330px;line-height:18px;letter-spacing:-0.406px;left:1267.5px;">Commercial</div>
<div class="a t" style="top:330px;line-height:18px;letter-spacing:-0.123px;left:1367px;">Downtown</div>
<div class="a t" style="top:330px;line-height:18px;letter-spacing:-0.427px;left:1557px;">Bob Johnson</div>
<div class="a" style="left:0;top:354px;width:1658px;height:28px;background:#f6f6f6;border-bottom:1px solid #e6e6e6;box-sizing:border-box"></div>
<div class="a t" style="top:357px;line-height:18px;letter-spacing:-0.316px;left:8px;">2121 Farmland Rd</div>
<div class="a t" style="top:357px;line-height:18px;letter-spacing:-0.18px;left:1183.72px;">250 000.00</div>
<div class="a t" style="top:357px;line-height:18px;letter-spacing:-0.48px;left:1267.5px;">Land</div>
<div class="a t" style="top:357px;line-height:18px;letter-spacing:-0.411px;left:1367px;">Rural</div>
<div class="a t" style="top:357px;line-height:18px;letter-spacing:-0.294px;left:1557px;">Alice Smith</div>
<div class="a" style="left:0;top:382px;width:1658px;height:27px;background:#fff;border-bottom:1px solid #e6e6e6;box-sizing:border-box"></div>
<div class="a t" style="top:384px;line-height:18px;letter-spacing:-0.313px;left:8px;">2222 Gardenia St</div>
<div class="a t" style="top:384px;line-height:18px;letter-spacing:-0.18px;left:1183.72px;">315 000.00</div>
<div class="a t" style="top:384px;line-height:18px;letter-spacing:-0.556px;left:1267.5px;">House</div>
<div class="a t" style="top:384px;line-height:18px;letter-spacing:-0.339px;left:1367px;">Suburbia</div>
<div class="a t" style="top:384px;line-height:18px;letter-spacing:-0.298px;left:1557px;">Charlie Brown</div>
<div class="a" style="left:0;top:409px;width:1658px;height:27px;background:#f6f6f6;border-bottom:1px solid #e6e6e6;box-sizing:border-box"></div>
<div class="a t" style="top:411px;line-height:18px;letter-spacing:-0.189px;left:8px;">2323 Skyline Apt</div>
<div class="a t" style="top:411px;line-height:18px;letter-spacing:-0.18px;left:1183.72px;">700 000.00</div>
<div class="a t" style="top:411px;line-height:18px;letter-spacing:-0.129px;left:1267.5px;">Apartment</div>
<div class="a t" style="top:411px;line-height:18px;letter-spacing:-0.123px;left:1367px;">Downtown</div>
<div class="a t" style="top:411px;line-height:18px;letter-spacing:-0.427px;left:1557px;">Bob Johnson</div>
<div class="a" style="left:0;top:436px;width:1658px;height:27px;background:#fff;border-bottom:1px solid #e6e6e6;box-sizing:border-box"></div>
<div class="a t" style="top:439px;line-height:18px;letter-spacing:-0.271px;left:8px;">2424 Beachfront Condo</div>
<div class="a t" style="top:439px;line-height:18px;letter-spacing:-0.18px;left:1183.72px;">850 000.00</div>
<div class="a t" style="top:439px;line-height:18px;letter-spacing:-0.587px;left:1267.5px;">Condo</div>
<div class="a t" style="top:439px;line-height:18px;letter-spacing:-0.511px;left:1367px;">Coastal</div>
<div class="a t" style="top:439px;line-height:18px;letter-spacing:-0.294px;left:1557px;">Alice Smith</div>
<div class="a" style="left:0;top:463px;width:1658px;height:28px;background:#f6f6f6;border-bottom:1px solid #e6e6e6;box-sizing:border-box"></div>
<div class="a t" style="top:466px;line-height:18px;letter-spacing:-0.23px;left:8px;">2525 Forest Retreat</div>
<div class="a t" style="top:466px;line-height:18px;letter-spacing:-0.18px;left:1183.72px;">420 000.00</div>
<div class="a t" style="top:466px;line-height:18px;letter-spacing:-0.556px;left:1267.5px;">House</div>
<div class="a t" style="top:466px;line-height:18px;letter-spacing:-0.221px;left:1367px;">Mountain</div>
<div class="a t" style="top:466px;line-height:18px;letter-spacing:-0.298px;left:1557px;">Charlie Brown</div>
<div class="a" style="left:0;top:491px;width:1658px;height:27px;background:#fff;border-bottom:1px solid #e6e6e6;box-sizing:border-box"></div>
<div class="a t" style="top:493px;line-height:18px;letter-spacing:-0.284px;left:8px;">2626 Meadow View</div>
<div class="a t" style="top:493px;line-height:18px;letter-spacing:-0.18px;left:1183.72px;">390 000.00</div>
<div class="a t" style="top:493px;line-height:18px;letter-spacing:-0.556px;left:1267.5px;">House</div>
<div class="a t" style="top:493px;line-height:18px;letter-spacing:-0.411px;left:1367px;">Rural</div>
<div class="a t" style="top:493px;line-height:18px;letter-spacing:-0.294px;left:1557px;">Alice Smith</div>
<div class="a" style="left:0;top:518px;width:1658px;height:27px;background:#f6f6f6;border-bottom:1px solid #e6e6e6;box-sizing:border-box"></div>
<div class="a t" style="top:520px;line-height:18px;letter-spacing:-0.161px;left:8px;">2727 Urban Loft</div>
<div class="a t" style="top:520px;line-height:18px;letter-spacing:-0.045px;left:806px;">Stylish loft apartment in a trendy urban area.</div>
<div class="a t" style="top:520px;line-height:18px;letter-spacing:-0.18px;left:1183.72px;">340 000.00</div>
<div class="a t" style="top:520px;line-height:18px;letter-spacing:-0.129px;left:1267.5px;">Apartment</div>
<div class="a t" style="top:520px;line-height:18px;letter-spacing:-0.123px;left:1367px;">Downtown</div>
<div class="a t" style="top:520px;line-height:18px;letter-spacing:-0.427px;left:1557px;">Bob Johnson</div>
<div class="a" style="left:0;top:545px;width:1658px;height:27px;background:#fff;border-bottom:1px solid #e6e6e6;box-sizing:border-box"></div>
<div class="a t" style="top:548px;line-height:18px;letter-spacing:-0.215px;left:8px;">2828 Riverfront Condo</div>
<div class="a t" style="top:548px;line-height:18px;letter-spacing:-0.092px;left:806px;">Modern condo with stunning river views.</div>
<div class="a t" style="top:548px;line-height:18px;letter-spacing:-0.18px;left:1183.72px;">370 000.00</div>
<div class="a t" style="top:548px;line-height:18px;letter-spacing:-0.587px;left:1267.5px;">Condo</div>
<div class="a t" style="top:548px;line-height:18px;letter-spacing:-0.511px;left:1367px;">Coastal</div>
<div class="a t" style="top:548px;line-height:18px;letter-spacing:-0.294px;left:1557px;">Alice Smith</div>
<div class="a" style="left:0;top:572px;width:1658px;height:28px;background:#f6f6f6;border-bottom:1px solid #e6e6e6;box-sizing:border-box"></div>
<div class="a t" style="top:575px;line-height:18px;letter-spacing:-0.146px;left:8px;">2929 Summit Townhouse</div>
<div class="a t" style="top:575px;line-height:18px;letter-spacing:-0.092px;left:806px;">Townhouse with access to mountain trails.</div>
<div class="a t" style="top:575px;line-height:18px;letter-spacing:-0.18px;left:1183.72px;">410 000.00</div>
<div class="a t" style="top:575px;line-height:18px;letter-spacing:-0.16px;left:1267.5px;">Townhouse</div>
<div class="a t" style="top:575px;line-height:18px;letter-spacing:-0.221px;left:1367px;">Mountain</div>
<div class="a t" style="top:575px;line-height:18px;letter-spacing:-0.298px;left:1557px;">Charlie Brown</div>
<div class="a" style="left:0;top:600px;width:1658px;height:27px;background:#fff;border-bottom:1px solid #e6e6e6;box-sizing:border-box"></div>
<div class="a t" style="top:602px;line-height:18px;letter-spacing:-0.373px;left:8px;">303 Pine Lane</div>
<div class="a t" style="top:602px;line-height:18px;letter-spacing:-0.174px;left:806px;">Cozy condo in a quiet neighborhood.</div>
<div class="a t" style="top:602px;line-height:18px;letter-spacing:-0.18px;left:1183.72px;">220 000.00</div>
<div class="a t" style="top:602px;line-height:18px;letter-spacing:-0.587px;left:1267.5px;">Condo</div>
<div class="a t" style="top:602px;line-height:18px;letter-spacing:-0.339px;left:1367px;">Suburbia</div>
<div class="a t" style="top:602px;line-height:18px;letter-spacing:-0.294px;left:1557px;">Alice Smith</div>
<div class="a" style="left:0;top:627px;width:1658px;height:27px;background:#f6f6f6;border-bottom:1px solid #e6e6e6;box-sizing:border-box"></div>
<div class="a t" style="top:629px;line-height:18px;letter-spacing:-0.412px;left:8px;">3030 Business Park</div>
<div class="a t" style="top:629px;line-height:18px;letter-spacing:-0.096px;left:806px;">Office building in a thriving business park.</div>
<div class="a t" style="top:629px;line-height:18px;letter-spacing:-0.142px;left:1171.95px;">1 200 000.00</div>
<div class="a t" style="top:629px;line-height:18px;letter-spacing:-0.406px;left:1267.5px;">Commercial</div>
<div class="a t" style="top:629px;line-height:18px;letter-spacing:-0.123px;left:1367px;">Downtown</div>
<div class="a t" style="top:629px;line-height:18px;letter-spacing:-0.427px;left:1557px;">Bob Johnson</div>
<div class="a" style="left:0;top:654px;width:1658px;height:27px;background:#fff;border-bottom:1px solid #e6e6e6;box-sizing:border-box"></div>
<div class="a t" style="top:657px;line-height:18px;letter-spacing:-0.256px;left:8px;">3131 Vineyard Land</div>
<div class="a t" style="top:657px;line-height:18px;letter-spacing:-0.091px;left:806px;">Land suitable for vineyard cultivation.</div>
<div class="a t" style="top:657px;line-height:18px;letter-spacing:-0.18px;left:1183.72px;">300 000.00</div>
<div class="a t" style="top:657px;line-height:18px;letter-spacing:-0.48px;left:1267.5px;">Land</div>
<div class="a t" style="top:657px;line-height:18px;letter-spacing:-0.411px;left:1367px;">Rural</div>
<div class="a t" style="top:657px;line-height:18px;letter-spacing:-0.294px;left:1557px;">Alice Smith</div>
</div>
<div class="a" style="left:1907px;top:319px;width:12px;height:670px;background:#f1f1f1"></div>
<div class="a" style="left:1907px;top:319px;width:12px;height:634px;background:#8c8c8c"></div>
<div class="a" style="left:249px;top:989px;width:1670px;height:29px;background:#efefef;border-top:1px solid #cfcfcf;box-sizing:border-box"></div>
<svg class="a" style="left:256.25px;top:998.75px;opacity:0.35" width="13" height="15" viewBox="0 0 13 15"><rect x="0" y="0" width="2.800" height="15" fill="#4a63c8"/><path d="M12.800 .3V14.700L4 7.500z" fill="#4a63c8"/></svg>
<svg class="a" style="left:284px;top:998.75px;opacity:0.35" width="9" height="15" viewBox="0 0 9 15"><path d="M8.700 .3V14.700L0 7.500z" fill="#4a63c8"/></svg>
<div class="a" style="left:307px;top:997.75px;width:1px;height:17px;background:#cfcfcf"></div>
<div class="a t" style="top:997px;line-height:18px;letter-spacing:-0.788px;left:318px;">Page</div>
<div class="a" style="left:360px;top:994px;width:62px;height:23px;border:1px solid #cfcfcf;background:#fff;box-sizing:border-box"></div>
<div class="a t" style="top:997px;line-height:18px;letter-spacing:-0.317px;left:364.5px;">1</div>
<div class="a t" style="top:997px;line-height:18px;letter-spacing:0.044px;left:430px;">of 2</div>
<div class="a" style="left:464px;top:997.75px;width:1px;height:17px;background:#cfcfcf"></div>
<svg class="a" style="left:477px;top:998.75px;opacity:1" width="9" height="15" viewBox="0 0 9 15"><path d="M.3 .3V14.700L9 7.500z" fill="#3f5fd0"/></svg>
<svg class="a" style="left:502px;top:998.75px;opacity:1" width="13" height="15" viewBox="0 0 13 15"><rect x="10.200" y="0" width="2.800" height="15" fill="#3f5fd0"/><path d="M.2 .3V14.700L9 7.500z" fill="#3f5fd0"/></svg>
<div class="a" style="left:526px;top:997.75px;width:1px;height:17px;background:#cfcfcf"></div>
<svg class="a" style="left:534px;top:997px;opacity:1" width="18" height="18" viewBox="0 0 18 18"><defs><linearGradient id="gr3" x1="0" y1="0" x2="1" y2="1"><stop offset="0" stop-color="#4076da"/><stop offset="1" stop-color="#9cc4f7"/></linearGradient></defs><path d="M2.700 5.600C4 1.300 10.500 -.8 15.300 4.500L17.700 3.100V9.700H9.700L12.300 7.400C10 4.600 7 4.600 5.700 6.800z" fill="url(#gr3)"/><path d="M2.700 5.600C4 1.300 10.500 -.8 15.300 4.500L17.700 3.100V9.700H9.700L12.300 7.400C10 4.600 7 4.600 5.700 6.800z" fill="url(#gr3)" transform="rotate(180 9 9)"/></svg>
<div class="a" style="left:559px;top:997.75px;width:1px;height:17px;background:#cfcfcf"></div>
<svg class="a" style="left:567px;top:997px" width="18" height="18" viewBox="0 0 18 18"><defs><linearGradient id="gx4" x1="0" y1="0" x2="1" y2="1"><stop offset="0" stop-color="#62ae42"/><stop offset=".42" stop-color="#b4ee8a"/><stop offset="1" stop-color="#3f8c2a"/></linearGradient></defs><path d="M16 1.200L11 1.200 1.500 13 7 13z" fill="#4e9c35"/><path d="M.3 1.200H5.600L18 16H12.200z" fill="url(#gx4)"/><path d="M12 7.500l4.500-.3-2.800 3z" fill="#4e9c35"/></svg>
<svg class="a" style="left:595px;top:998px" width="17" height="17" viewBox="0 0 17 17"><path d="M.3 1V16.500L5 11.200H3.200V1z" fill="#7cc45a"/><rect x="4.900" y="1.200" width="8.800" height="3.700" fill="#fff" stroke="#5f9ef5" stroke-width="1.400"/><rect x="4.900" y="4.900" width="11.400" height="3.900" fill="#fff" stroke="#5f9ef5" stroke-width="1.400"/></svg>
<div class="a t" style="top:997px;line-height:18px;letter-spacing:-0.091px;left:1768.78px;">Displaying 1 - 25 of 40</div>
<!-- Record window -->
<div class="a" style="left:495px;top:299px;width:928px;height:530px;background:#70b4f0;box-shadow:3px 3px 7px rgba(0,0,0,.3)"></div>
<div class="a" style="left:500px;top:329px;width:918px;height:301px;background:#fff"></div>
<svg class="a" style="left:502px;top:306px" width="16" height="16" viewBox="0 0 16 16"><path d="M2.200 13.800L13.400 1.900" stroke="#76b455" stroke-width="4.600" stroke-linecap="butt"/><path d="M2.500 13.500L13.100 2.200" stroke="#a2dc82" stroke-width="2.400"/><path d="M.3 15.700l.4-3.800 3.300 3z" fill="#4c5a44"/></svg>
<div class="a t" style="top:303px;line-height:20px;letter-spacing:-0.307px;color:#fff;left:522px;">1010 Cherry Lane</div>
<svg class="a" style="left:643.5px;top:312px" width="9" height="5" viewBox="0 0 9 5"><path d="M0 0H9L4.5 5z" fill="#fff"/></svg>
<svg class="a" style="left:1342px;top:303px" width="22" height="22" viewBox="-11 -11 22 22"><circle r="10" fill="#e0eefb"/><rect x="-6" y="-1" width="12" height="2.100" fill="#70b3ef"/></svg>
<svg class="a" style="left:1369px;top:303px" width="22" height="22" viewBox="-11 -11 22 22"><circle r="10" fill="#e0eefb"/><rect x="-5" y="-5" width="10" height="10" fill="#70b3ef"/><path d="M-6 -6L6 6" stroke="#e0eefb" stroke-width="2"/></svg>
<svg class="a" style="left:1397px;top:303px" width="22" height="22" viewBox="-11 -11 22 22"><circle r="10" fill="#e0eefb"/><path d="M-5.200 -5.200L5.200 5.200M5.200 -5.200L-5.200 5.200" stroke="#70b3ef" stroke-width="1.700" fill="none"/></svg>
<div class="a" style="left:500px;top:362px;width:918px;height:1px;background:#d0d0d0"></div>
<div class="a t" style="top:337px;line-height:18px;letter-spacing:0.453px;left:507px;">ID:</div>
<div class="a" style="left:532px;top:334px;width:37px;height:22px;border:1px solid #cfcfcf;background:#fff;box-sizing:border-box"></div>
<div class="a t" style="top:336px;line-height:18px;letter-spacing:-0.309px;left:535.5px;">10</div>
<div class="a" style="left:574px;top:333px;width:63px;height:25px;border:1px solid #dcdcdc;background:#f5f5f5;box-sizing:border-box"></div>
<svg class="a" style="left:577px;top:336px" width="18" height="18" viewBox="0 0 18 18"><path d="M.5 .5H14.500L17.500 3.500V17.500H.5z" fill="#6cbb4a" stroke="#5aa83a"/><rect x="4" y="10" width="10" height="7" fill="#fff"/><rect x="6.500" y="1.500" width="7.500" height="5" fill="#fff"/><rect x="11.500" y="2.500" width="1.800" height="2.500" fill="#555"/></svg>
<div class="a t" style="top:336px;line-height:18px;letter-spacing:-0.764px;color:#444;left:600px;">Save</div>
<div class="a" style="left:642px;top:337px;width:18px;height:18px;border:2px solid #8d8d8d;border-radius:3px;background:#fff;box-sizing:border-box;box-shadow:inset 0 0 0 1px #d9d9d9"></div>
<div class="a" style="left:665px;top:337px;width:1px;height:17px;background:#cfcfcf"></div>
<svg class="a" style="left:676px;top:336px;opacity:1" width="18" height="18" viewBox="0 0 18 18"><defs><linearGradient id="gr5" x1="0" y1="0" x2="1" y2="1"><stop offset="0" stop-color="#4076da"/><stop offset="1" stop-color="#9cc4f7"/></linearGradient></defs><path d="M2.700 5.600C4 1.300 10.500 -.8 15.300 4.500L17.700 3.100V9.700H9.700L12.300 7.400C10 4.600 7 4.600 5.700 6.800z" fill="url(#gr5)"/><path d="M2.700 5.600C4 1.300 10.500 -.8 15.300 4.500L17.700 3.100V9.700H9.700L12.300 7.400C10 4.600 7 4.600 5.700 6.800z" fill="url(#gr5)" transform="rotate(180 9 9)"/></svg>
<div class="a" style="left:704px;top:337px;width:1px;height:17px;background:#cfcfcf"></div>
<svg class="a" style="left:715px;top:336px;opacity:0.8" width="18" height="18" viewBox="0 0 18 18"><path d="M4.600 2.700C.2 5.500 -.6 11 2.900 14.500V17.700H10.200V10.300L7.800 12.300C5.200 10.500 4 7 4.600 2.700z" fill="#f0a592"/><path d="M4.600 2.700C.2 5.500 -.6 11 2.900 14.500V17.700H10.200V10.300L7.800 12.300C5.200 10.500 4 7 4.600 2.700z" fill="#bde6a8" transform="rotate(180 9 8.850)"/></svg>
<div class="a" style="left:743px;top:337px;width:1px;height:17px;background:#cfcfcf"></div>
<svg class="a" style="left:757.3px;top:336.8px;opacity:1" width="9" height="15" viewBox="0 0 9 15"><path d="M8.700 .3V14.700L0 7.500z" fill="#4a63c8"/></svg>
<svg class="a" style="left:790.4px;top:336.8px;opacity:1" width="9" height="15" viewBox="0 0 9 15"><path d="M.3 .3V14.700L9 7.500z" fill="#3f5fd0"/></svg>
<div class="a" style="left:814px;top:337px;width:1px;height:17px;background:#cfcfcf"></div>
<svg class="a" style="left:825px;top:336px" width="18" height="18" viewBox="0 0 18 18"><defs><linearGradient id="ga6" x1="0" y1="0" x2="1" y2="1"><stop offset="0" stop-color="#c4eaae"/><stop offset="1" stop-color="#7fc062"/></linearGradient></defs><rect x=".5" y=".5" width="17" height="17" rx=".5" fill="url(#ga6)" stroke="#7db465"/><rect x="1.500" y="1.500" width="15" height="15" fill="none" stroke="#a9d993" stroke-width="1" opacity=".7"/><path d="M9 3.800v10.400M3.800 9h10.400" stroke="#fff" stroke-width="2.500"/></svg>
<svg class="a" style="left:858px;top:337px" width="16" height="16" viewBox="0 0 16 16"><defs><linearGradient id="gd7" x1="0" y1="0" x2="1" y2="1"><stop offset="0" stop-color="#eaa6b0"/><stop offset="1" stop-color="#cf445c"/></linearGradient></defs><path d="M3.300 .4L8 5.100 12.700 .4 15.600 3.300 10.900 8 15.600 12.700 12.700 15.600 8 10.900 3.300 15.600 .4 12.700 5.100 8 .4 3.300z" fill="url(#gd7)"/></svg>
<div class="a" style="left:885px;top:337px;width:1px;height:17px;background:#cfcfcf"></div>
<div class="a" style="left:892px;top:336px;width:375px;height:20px;background:#5587b1"></div><div class="a t" style="top:336px;line-height:20px;letter-spacing:-0.32px;color:#fff;left:899px;">Viewings</div><div class="a t" style="top:336px;line-height:20px;letter-spacing:1.786px;color:#fff;left:967.713px;">+</div><div class="a t" style="top:336px;line-height:20px;letter-spacing:-0.207px;color:#fff;left:992.3px;">Offers</div><div class="a t" style="top:336px;line-height:20px;letter-spacing:1.786px;color:#fff;left:1044.01px;">+</div><div class="a t" style="top:336px;line-height:20px;letter-spacing:-0.321px;color:#fff;left:1068.4px;">Contracts</div><div class="a t" style="top:336px;line-height:20px;letter-spacing:1.786px;color:#fff;left:1140.61px;">+</div><div class="a t" style="top:336px;line-height:20px;letter-spacing:-0.174px;color:#fff;left:1165.2px;">Inspections</div><div class="a t" style="top:336px;line-height:20px;letter-spacing:1.786px;color:#fff;left:1249.01px;">+</div>
<div class="a t" style="top:337px;line-height:18px;letter-spacing:0.14px;left:1280.5px;">Row #</div>
<div class="a" style="left:1330px;top:334px;width:55px;height:23px;border:1px solid #cfcfcf;background:#fff;box-sizing:border-box"></div>
<div class="a t" style="top:337px;line-height:18px;letter-spacing:-0.317px;left:1334px;">2</div>
<svg class="a" style="left:1370px;top:338px" width="10" height="15" viewBox="0 0 10 15"><path d="M0 6L5 1 10 6zM0 9L5 14 10 9z" fill="#8a8a8a"/></svg>
<div class="a t" style="top:336px;line-height:18px;letter-spacing:0.044px;left:1391.5px;">of 4</div>
<div class="a" style="left:513px;top:376px;width:892px;height:27px;border:1px solid #c2cdf5;background:#e4fce1;box-sizing:border-box"></div>
<div class="a t" style="top:378px;line-height:20px;letter-spacing:-0.238px;font-size:15.2px;color:#111;left:931.25px;">Property</div>
<div class="a" style="left:513px;top:428px;width:892px;height:1px;background:#c2cdf5"></div>
<div class="a" style="left:513px;top:471px;width:892px;height:1px;background:#c2cdf5"></div>
<div class="a" style="left:513px;top:498px;width:892px;height:1px;background:#c2cdf5"></div>
<div class="a" style="left:513px;top:526px;width:892px;height:1px;background:#c2cdf5"></div>
<div class="a" style="left:513px;top:553px;width:892px;height:1px;background:#c2cdf5"></div>
<div class="a" style="left:513px;top:584px;width:892px;height:1px;background:#c2cdf5"></div>
<div class="a t" style="top:408px;line-height:18px;letter-spacing:-0.209px;left:513.3px;">Property address:</div>
<div class="a t" style="top:443px;line-height:18px;letter-spacing:-0.14px;left:513.3px;">Description:</div>
<div class="a t" style="top:477px;line-height:18px;letter-spacing:-0.297px;left:513.3px;">Price:</div>
<div class="a t" style="top:504px;line-height:18px;letter-spacing:-0.055px;left:513.3px;">Property type:</div>
<div class="a t" style="top:532px;line-height:18px;letter-spacing:-0.157px;left:513.3px;">Location:</div>
<div class="a t" style="top:562px;line-height:18px;letter-spacing:-0.162px;left:513.3px;">Photo:</div>
<div class="a t" style="top:590px;line-height:18px;letter-spacing:-0.069px;left:513.3px;">Agent:</div>
<div class="a t" style="top:589px;line-height:18px;letter-spacing:0px;font-size:13px;left:558.6px;font-family:'DejaVu Sans',sans-serif;">☰</div>
<div class="a" style="left:959px;top:404px;width:446px;height:23px;border:1px solid #cfcfcf;background:#fff;box-sizing:border-box"></div>
<div class="a t" style="top:406px;line-height:18px;letter-spacing:-0.307px;left:963px;">1010 Cherry Lane</div>
<div class="a" style="left:959px;top:431px;width:446px;height:39px;border:1px solid #cfcfcf;background:#fff;box-sizing:border-box"></div>
<div class="a t" style="top:433px;line-height:18px;letter-spacing:-0.092px;left:963px;">Family-friendly townhouse with a community pool.</div>
<div class="a" style="left:959px;top:474px;width:125px;height:23px;border:1px solid #cfcfcf;background:#fff;box-sizing:border-box"></div>
<div class="a t" style="top:476px;line-height:18px;letter-spacing:-0.244px;left:963px;">330000.00</div>
<svg class="a" style="left:1068.5px;top:478px" width="10" height="15" viewBox="0 0 10 15"><path d="M0 6L5 1 10 6zM0 9L5 14 10 9z" fill="#8a8a8a"/></svg>
<svg class="a" style="left:937px;top:505px" width="18" height="18" viewBox="0 0 18 18"><path d="M2 13.200L13.800 2" stroke="#74b452" stroke-width="4.400"/><path d="M2.300 12.900L13.500 2.300" stroke="#a0da80" stroke-width="2.200"/><path d="M.3 15.200l.4-3.400 3 2.700z" fill="#4c5a44"/><path d="M8 11.700h4.700V9.600L17.700 13.200 12.700 16.800V14.700H8z" fill="#74aeee" stroke="#5a97e0" stroke-width=".6"/></svg>
<div class="a" style="left:959px;top:500px;width:446px;height:24px;border:1px solid #cfcfcf;background:#fff;box-sizing:border-box"></div>
<div class="a t" style="top:503px;line-height:18px;letter-spacing:-0.16px;color:#111;left:963px;">Townhouse</div>
<svg class="a" style="left:1388px;top:510.5px" width="10" height="5" viewBox="0 0 10 5"><path d="M0 0H10L5.0 5z" fill="#8a8a8a"/></svg>
<svg class="a" style="left:937px;top:532.2px" width="18" height="18" viewBox="0 0 18 18"><path d="M2 13.200L13.800 2" stroke="#74b452" stroke-width="4.400"/><path d="M2.300 12.900L13.500 2.300" stroke="#a0da80" stroke-width="2.200"/><path d="M.3 15.200l.4-3.400 3 2.700z" fill="#4c5a44"/><path d="M8 11.700h4.700V9.600L17.700 13.200 12.700 16.800V14.700H8z" fill="#74aeee" stroke="#5a97e0" stroke-width=".6"/></svg>
<div class="a" style="left:959px;top:528px;width:446px;height:24px;border:1px solid #cfcfcf;background:#fff;box-sizing:border-box"></div>
<div class="a t" style="top:531px;line-height:18px;letter-spacing:-0.339px;color:#111;left:963px;">Suburbia</div>
<svg class="a" style="left:1388px;top:538px" width="10" height="5" viewBox="0 0 10 5"><path d="M0 0H10L5.0 5z" fill="#8a8a8a"/></svg>
<svg class="a" style="left:958.2px;top:558.7px" width="20" height="20" viewBox="-10 -10 20 20"><circle r="8.700" fill="#fff" stroke="#8d8d8d" stroke-width="1.600"/><circle r="7.300" fill="none" stroke="#d9d9d9" stroke-width="1.300"/><circle r="4.600" fill="#8f8f8f"/></svg>
<div class="a t" style="top:560px;line-height:18px;letter-spacing:-0.665px;color:#222;left:980.5px;">No</div>
<svg class="a" style="left:1003px;top:558.7px" width="20" height="20" viewBox="-10 -10 20 20"><circle r="8.700" fill="#fff" stroke="#8d8d8d" stroke-width="1.600"/><circle r="7.300" fill="none" stroke="#d9d9d9" stroke-width="1.300"/></svg>
<div class="a t" style="top:560px;line-height:18px;letter-spacing:-0.452px;color:#111;left:1024.7px;">Browse</div>
<div class="a" style="left:1079px;top:558px;width:125px;height:22px;border:1px solid #cfcfcf;background:#fff;box-sizing:border-box"></div>
<div class="a t" style="top:560px;line-height:18px;letter-spacing:-0.042px;color:#8a8a8a;left:1083px;">your local file..</div>
<div class="a" style="left:1209px;top:559px;width:18.5px;height:18.5px;border:2px solid #8d8d8d;border-radius:3px;background:#fff;box-sizing:border-box;box-shadow:inset 0 0 0 1px #d9d9d9"></div>
<div class="a" style="left:934px;top:588px;width:22px;height:21px;border:1px solid #dcdcdc;background:#ebebeb;box-sizing:border-box"></div>
<svg class="a" style="left:937px;top:590.7px" width="18" height="18" viewBox="0 0 18 18"><path d="M2 13.200L13.800 2" stroke="#74b452" stroke-width="4.400"/><path d="M2.300 12.900L13.500 2.300" stroke="#a0da80" stroke-width="2.200"/><path d="M.3 15.200l.4-3.400 3 2.700z" fill="#4c5a44"/><path d="M8 11.700h4.700V9.600L17.700 13.200 12.700 16.800V14.700H8z" fill="#74aeee" stroke="#5a97e0" stroke-width=".6"/></svg>
<div class="a" style="left:959px;top:587px;width:446px;height:24px;border:1px solid #cfcfcf;background:#fff;box-sizing:border-box"></div>
<div class="a t" style="top:590px;line-height:18px;letter-spacing:-0.298px;color:#111;left:963px;">Charlie Brown</div>
<svg class="a" style="left:1388px;top:597px" width="10" height="5" viewBox="0 0 10 5"><path d="M0 0H10L5.0 5z" fill="#8a8a8a"/></svg>
<svg class="a" style="left:931px;top:596px" width="18" height="24" viewBox="0 0 18 24"><path d="M5.200 14.300V2A1.900 1.900 0 0 1 9 2V7.300A1.500 1.500 0 0 1 12 7.400A1.500 1.500 0 0 1 15 7.900A1.500 1.500 0 0 1 18 8.600V16C18 20.500 14.500 23.600 10.500 23.600C7 23.600 5 21 3.200 18L.7 14.600C-.4 13 1.400 11.700 2.800 12.800z" fill="#fff" stroke="#16162a" stroke-width="1.100" stroke-linejoin="round"/><path d="M9 7.300V10.800M12 7.400V10.800M15 7.900V10.800" stroke="#16162a" stroke-width="1.100" fill="none" stroke-linecap="round"/></svg>
<div class="a" style="left:505px;top:635px;width:79px;height:25px;background:#fff"></div>
<div class="a" style="left:589px;top:635px;width:62px;height:25px;background:#5f9acf"></div>
<div class="a" style="left:657px;top:635px;width:82px;height:25px;background:#5f9acf"></div>
<div class="a" style="left:744px;top:635px;width:94px;height:25px;background:#5f9acf"></div>
<div class="a t" style="top:638px;line-height:20px;letter-spacing:-0.32px;color:#6fa5dc;left:517.6px;">Viewings</div>
<div class="a t" style="top:638px;line-height:20px;letter-spacing:-0.207px;color:#fff;left:601.5px;">Offers</div>
<div class="a t" style="top:638px;line-height:20px;letter-spacing:-0.321px;color:#fff;left:669px;">Contracts</div>
<div class="a t" style="top:638px;line-height:20px;letter-spacing:-0.174px;color:#fff;left:757px;">Inspections</div>
<div class="a" style="left:500px;top:660px;width:918px;height:164px;background:#fff"></div>
<svg class="a" style="left:507px;top:667px" width="18" height="18" viewBox="0 0 18 18"><defs><linearGradient id="ga8" x1="0" y1="0" x2="1" y2="1"><stop offset="0" stop-color="#c4eaae"/><stop offset="1" stop-color="#7fc062"/></linearGradient></defs><rect x=".5" y=".5" width="17" height="17" rx=".5" fill="url(#ga8)" stroke="#7db465"/><rect x="1.500" y="1.500" width="15" height="15" fill="none" stroke="#a9d993" stroke-width="1" opacity=".7"/><path d="M9 3.800v10.400M3.800 9h10.400" stroke="#fff" stroke-width="2.500"/></svg>
<svg class="a" style="left:541px;top:668px" width="16" height="16" viewBox="0 0 16 16"><path d="M2.200 13.800L13.400 1.900" stroke="#76b455" stroke-width="4.600" stroke-linecap="butt"/><path d="M2.500 13.500L13.100 2.200" stroke="#a2dc82" stroke-width="2.400"/><path d="M.3 15.700l.4-3.800 3.300 3z" fill="#4c5a44"/></svg>
<svg class="a" style="left:573px;top:668px" width="16" height="16" viewBox="0 0 16 16"><defs><linearGradient id="gd9" x1="0" y1="0" x2="1" y2="1"><stop offset="0" stop-color="#eaa6b0"/><stop offset="1" stop-color="#cf445c"/></linearGradient></defs><path d="M3.300 .4L8 5.100 12.700 .4 15.600 3.300 10.900 8 15.600 12.700 12.700 15.600 8 10.900 3.300 15.600 .4 12.700 5.100 8 .4 3.300z" fill="url(#gd9)"/></svg>
<div class="a" style="left:600px;top:668px;width:1px;height:17px;background:#cfcfcf"></div>
<div class="a" style="left:1289.5px;top:665px;width:124px;height:24px;border:1px solid #cfcfcf;background:#fff;box-sizing:border-box"></div>
<div class="a t" style="top:668px;line-height:18px;letter-spacing:-0.294px;color:#8a8a8a;left:1293px;">Search...</div>
<div class="a" style="left:500px;top:693px;width:918px;height:27px;background:#efefef;border-top:1px solid #cfcfcf;border-bottom:1px solid #cfcfcf;box-sizing:border-box"></div>
<div class="a" style="left:627px;top:694px;width:1px;height:25px;background:#cfcfcf"></div>
<div class="a" style="left:1036px;top:694px;width:1px;height:25px;background:#cfcfcf"></div>
<div class="a" style="left:1143px;top:694px;width:1px;height:25px;background:#cfcfcf"></div>
<div class="a t" style="top:697px;line-height:18px;letter-spacing:-0.164px;left:508.2px;">Datetime</div>
<div class="a t" style="top:697px;line-height:18px;letter-spacing:-0.308px;left:635.4px;">Client</div>
<div class="a t" style="top:697px;line-height:18px;letter-spacing:-0.274px;left:1044.3px;">Agent</div>
<div class="a t" style="top:697px;line-height:18px;letter-spacing:-0.416px;left:1151.6px;">Notes</div>
<svg class="a" style="left:569px;top:704.5px" width="10" height="5" viewBox="0 0 10 5"><path d="M0 0H10L5.0 5z" fill="#9a9a9a"/></svg>
<div class="a" style="left:500px;top:720px;width:918px;height:27px;background:#e4fce1;border-bottom:1px solid #dfe8dc;box-sizing:border-box"></div>
<div class="a t" style="top:723px;line-height:18px;letter-spacing:-0.106px;left:508.2px;">2023-10-30 15:00</div>
<div class="a t" style="top:723px;line-height:18px;letter-spacing:-0.556px;left:635.4px;">Jessica Garcia</div>
<div class="a t" style="top:723px;line-height:18px;letter-spacing:-0.298px;left:1044.3px;">Charlie Brown</div>
<div class="a t" style="top:723px;line-height:18px;letter-spacing:-0.076px;left:1151.6px;">Client inquired about the community pool.</div>
<div class="a" style="left:500px;top:794px;width:918px;height:30px;background:#efefef;border-top:1px solid #cfcfcf;box-sizing:border-box"></div>
<svg class="a" style="left:507.75px;top:803.25px;opacity:0.35" width="13" height="15" viewBox="0 0 13 15"><rect x="0" y="0" width="2.800" height="15" fill="#4a63c8"/><path d="M12.800 .3V14.700L4 7.500z" fill="#4a63c8"/></svg>
<svg class="a" style="left:535.5px;top:803.25px;opacity:0.35" width="9" height="15" viewBox="0 0 9 15"><path d="M8.700 .3V14.700L0 7.500z" fill="#4a63c8"/></svg>
<div class="a" style="left:558px;top:802.25px;width:1px;height:17px;background:#cfcfcf"></div>
<div class="a t" style="top:802px;line-height:18px;letter-spacing:-0.788px;left:569.5px;">Page</div>
<div class="a" style="left:612px;top:799px;width:62px;height:23px;border:1px solid #cfcfcf;background:#fff;box-sizing:border-box"></div>
<div class="a t" style="top:802px;line-height:18px;letter-spacing:-0.317px;left:616px;">1</div>
<div class="a t" style="top:802px;line-height:18px;letter-spacing:0.044px;left:681.5px;">of 1</div>
<div class="a" style="left:716px;top:802.25px;width:1px;height:17px;background:#cfcfcf"></div>
<svg class="a" style="left:728.5px;top:803.25px;opacity:0.35" width="9" height="15" viewBox="0 0 9 15"><path d="M.3 .3V14.700L9 7.500z" fill="#3f5fd0"/></svg>
<svg class="a" style="left:753.5px;top:803.25px;opacity:0.35" width="13" height="15" viewBox="0 0 13 15"><rect x="10.200" y="0" width="2.800" height="15" fill="#3f5fd0"/><path d="M.2 .3V14.700L9 7.500z" fill="#3f5fd0"/></svg>
<div class="a" style="left:777px;top:802.25px;width:1px;height:17px;background:#cfcfcf"></div>
<svg class="a" style="left:785px;top:802px;opacity:1" width="18" height="18" viewBox="0 0 18 18"><defs><linearGradient id="gr10" x1="0" y1="0" x2="1" y2="1"><stop offset="0" stop-color="#4076da"/><stop offset="1" stop-color="#9cc4f7"/></linearGradient></defs><path d="M2.700 5.600C4 1.300 10.500 -.8 15.300 4.500L17.700 3.100V9.700H9.700L12.300 7.400C10 4.600 7 4.600 5.700 6.800z" fill="url(#gr10)"/><path d="M2.700 5.600C4 1.300 10.500 -.8 15.300 4.500L17.700 3.100V9.700H9.700L12.300 7.400C10 4.600 7 4.600 5.700 6.800z" fill="url(#gr10)" transform="rotate(180 9 9)"/></svg>
<div class="a" style="left:810px;top:802.25px;width:1px;height:17px;background:#cfcfcf"></div>
<svg class="a" style="left:818px;top:802px" width="18" height="18" viewBox="0 0 18 18"><defs><linearGradient id="gx11" x1="0" y1="0" x2="1" y2="1"><stop offset="0" stop-color="#62ae42"/><stop offset=".42" stop-color="#b4ee8a"/><stop offset="1" stop-color="#3f8c2a"/></linearGradient></defs><path d="M16 1.200L11 1.200 1.500 13 7 13z" fill="#4e9c35"/><path d="M.3 1.200H5.600L18 16H12.200z" fill="url(#gx11)"/><path d="M12 7.500l4.500-.3-2.800 3z" fill="#4e9c35"/></svg>
<svg class="a" style="left:846px;top:802px" width="17" height="17" viewBox="0 0 17 17"><path d="M.3 1V16.500L5 11.200H3.200V1z" fill="#7cc45a"/><rect x="4.900" y="1.200" width="8.800" height="3.700" fill="#fff" stroke="#5f9ef5" stroke-width="1.400"/><rect x="4.900" y="4.900" width="11.400" height="3.900" fill="#fff" stroke="#5f9ef5" stroke-width="1.400"/></svg>
<div class="a t" style="top:802px;line-height:18px;letter-spacing:-0.07px;left:1281.44px;">Displaying 1 - 1 of 1</div>
<!-- Taskbar -->
<div class="a" style="left:0;top:1019px;width:1919px;height:60px;background:linear-gradient(90deg,#14213c 0,#15253f 640px,#18273c 740px,#25281f 790px,#2b291c 850px,#2d2a1c 1300px,#2b2a1d 1600px,#27331f 1638px,#1b2e3a 1668px,#15274a 1725px,#14254a 1919px);box-shadow:inset 0 1px 0 rgba(255,255,255,.1)"></div>
<svg class="a" style="left:641px;top:1035px" width="30" height="30" viewBox="0 0 30 30"><defs><linearGradient id="wl" gradientUnits="userSpaceOnUse" x1="0" y1="0" x2="30" y2="30"><stop offset="0" stop-color="#8df0ff"/><stop offset=".5" stop-color="#3cc4fb"/><stop offset="1" stop-color="#0a9af5"/></linearGradient></defs><g fill="url(#wl)"><rect x="0" y="0" width="14.200" height="14.200" rx="1"/><rect x="15.200" y="0" width="14.200" height="14.200" rx="1"/><rect x="0" y="15.200" width="14.200" height="14.200" rx="1"/><rect x="15.200" y="15.200" width="14.200" height="14.200" rx="1"/></g></svg>
<div class="a" style="left:688px;top:1024px;width:50px;height:50px;border-radius:5px;background:rgba(255,255,255,.075);box-shadow:inset 0 0 0 1px rgba(255,255,255,.04)"></div>
<svg class="a" style="left:698px;top:1034px" width="30" height="30" viewBox="-15 -15 30 30"><circle r="15" fill="#fff"/><path d="M0 -15A15 15 0 0 1 12.990 -7.500L0 -7.500A7.500 7.500 0 0 0 -6.495 -3.750L-12.990 -7.500A15 15 0 0 1 0 -15z" fill="#ea4335"/><path d="M-12.990 -7.500A15 15 0 0 1 0 -15L12.990 -7.500H0A7.500 7.500 0 0 0 -6.495 3.750z" fill="#ea4335"/><path d="M12.990 -7.500A15 15 0 0 1 0 15L6.495 3.750A7.500 7.500 0 0 0 0 -7.500z" fill="#fbbc04"/><path d="M0 15A15 15 0 0 1 -12.990 -7.500L-6.495 3.750A7.500 7.500 0 0 0 6.495 3.750z" fill="#34a853"/><circle r="6.800" fill="#fff"/><circle r="5.500" fill="#4285f4"/></svg>
<div class="a" style="left:703px;top:1069px;width:20px;height:4px;border-radius:2px;background:#4cc2ff"></div>
<svg class="a" style="left:753px;top:1034px" width="28.400" height="29" viewBox="0 0 29 29"><rect x=".5" y=".5" width="28" height="25" fill="#0a0ad0" stroke="#19e0e6" stroke-width="1.200"/><path d="M14.500 1V25M9.500 1V25M23.500 1V25" stroke="#19e0e6" stroke-width="1"/><path d="M3 3h4M3 6.500h5M3 9.500h5M3 12.500h5M11 3h2M16 3h5M16 6.500h5M16 9.500h5M25 3h2M3 21.500h5M16 21.500h5" stroke="#7fc8ff" stroke-width="1"/><path d="M3 3h4M16 3h5" stroke="#ffc24a" stroke-width="1.200"/><rect x="0" y="26" width="29" height="3" fill="#111"/><path d="M1 27.500h27" stroke="#19c0c0" stroke-width="1.500" stroke-dasharray="3 1.500"/></svg>
<div class="a" style="left:764px;top:1069px;width:8.500px;height:4px;border-radius:2px;background:#9b9b9b"></div>
<div class="a" style="left:1204px;top:1069px;width:8.500px;height:4px;border-radius:2px;background:#9b9b9b"></div>
<div class="a" style="left:1259px;top:1069px;width:8.500px;height:4px;border-radius:2px;background:#9b9b9b"></div>
<svg class="a" style="left:808px;top:1034.500px" width="29" height="29" viewBox="-14.500 -14.500 29 29"><circle r="14.300" fill="#fff"/><g stroke-width="3.500" stroke-linecap="round" fill="none"><path d="M-8.300 -2.600h5.700" stroke="#36c5f0"/><path d="M-2.600 -7.800v.1" stroke="#36c5f0"/><path d="M2.600 -8.300v5.700" stroke="#2eb67d"/><path d="M7.800 -2.600h.1" stroke="#2eb67d"/><path d="M2.600 2.600h5.700" stroke="#ecb22e"/><path d="M2.600 7.800v.1" stroke="#ecb22e"/><path d="M-2.600 2.600v5.700" stroke="#e01e5a"/><path d="M-7.800 2.600h.1" stroke="#e01e5a"/></g></svg>
<svg class="a" style="left:862px;top:1033px" width="32" height="32" viewBox="0 0 32 32"><defs><linearGradient id="pst" x1="0" y1="0" x2="1" y2="1"><stop offset="0" stop-color="#c24cf3"/><stop offset=".55" stop-color="#9a55f6"/><stop offset="1" stop-color="#7060fa"/></linearGradient></defs><path d="M.9 7.400L5.900 1 16.300 3.700 18.800 2.800 27.200 4.500 30.900 13.300 28 17 30.900 23.700 19.300 31 9.300 26.600 3.400 23.700z" fill="url(#pst)"/><path d="M.9 7.400L5.900 1 16.300 3.700 13 9 3 12z" fill="#fb3da4"/><rect x="7" y="6.800" width="18" height="18" fill="#000"/><text x="7.900" y="15.800" font-family="Liberation Sans,sans-serif" font-weight="bold" font-size="10.200" fill="#fff" letter-spacing="-.2">PS</text><rect x="8.300" y="22" width="7.600" height="1.300" fill="#fff"/></svg>
<svg class="a" style="left:919px;top:1033px" width="28" height="32" viewBox="0 0 28 32"><path d="M.8 15.800C3 12 6 8 12.700 5.300L17.200 1 18.500 5.300C22 7 26 11 26 16.200C26 21 23 25 21 27C20.500 29 19.500 30.500 18.500 31C17 30.500 16 29.500 16 28.700C16.500 27.500 17 26.500 16.800 25.300C15.500 24.800 14 24 13.500 22.800C14 21.800 14.500 21 15.200 20.700C17 20.500 18.500 19.800 19.300 18.700C18.500 16.800 17 15.500 15.200 14.900C13.500 14.200 12 14 11 14.100C8 14.500 6 15.500 4.300 16.200C3 16.600 1.500 16.500 .8 15.800z" fill="#2e8dfe"/></svg>
<svg class="a" style="left:972px;top:1033px" width="32" height="32" viewBox="0 0 32 32"><defs><linearGradient id="lka" x1="0" y1="0" x2="1" y2="1"><stop offset="0" stop-color="#6fe0ff"/><stop offset="1" stop-color="#1c8fe2"/></linearGradient><linearGradient id="lkb" x1="0" y1="0" x2="0" y2="1"><stop offset="0" stop-color="#f4f4f4"/><stop offset="1" stop-color="#a9a9a9"/></linearGradient></defs><path d="M.9 .8H13L9.700 4.300 13.600 8.800 9 12.800 5 8.600 .9 12.800z" fill="url(#lka)"/><path d="M11.300 15V11.500a4.700 4.700 0 0 1 9.400 0V15" fill="none" stroke="#ececec" stroke-width="2.600"/><rect x="8" y="14" width="16" height="11.500" rx="1" fill="url(#lkb)"/><path d="M30.900 31H17.500L21 27.300 16.800 22.500 21.500 18.300 26.500 23.200 30.900 19z" fill="#58c81e"/><path d="M30 30.200H19.500" stroke="#a6ee7a" stroke-width="1"/></svg>
<svg class="a" style="left:1029px;top:1034.500px" width="27" height="26" viewBox="0 0 27 26"><rect x="1" y="1" width="25" height="24" rx="4.500" fill="#001e36" stroke="#2fb3f7" stroke-width="1.800"/><text x="6.200" y="19.600" font-family="Liberation Sans,sans-serif" font-size="16.500" fill="#c8e8f8" textLength="15" lengthAdjust="spacingAndGlyphs">Ps</text></svg>
<svg class="a" style="left:1083px;top:1034px" width="30" height="30" viewBox="-15 -15 30 30"><g transform="rotate(45)"><rect x="-10.300" y="-10.300" width="10" height="10" rx="1" fill="#f47f80"/><rect x=".3" y="-10.300" width="10" height="10" rx="1" fill="#7cc45a"/><rect x="-10.300" y=".3" width="10" height="10" rx="1" fill="#75a7f4"/><rect x=".3" y=".3" width="10" height="10" rx="1" fill="#fbd96a"/></g><path d="M0 -6V7M0 -2L6 0" stroke="#1a1a1a" stroke-width="2" fill="none"/><circle cx="0" cy="-7" r="2.200" fill="#1a1a1a"/><circle cx="0" cy="7" r="2.200" fill="#1a1a1a"/><circle cx="6.500" cy="0" r="2.200" fill="#1a1a1a"/></svg>
<svg class="a" style="left:1140px;top:1034px" width="24" height="30" viewBox="0 0 24 30"><rect x="0" y="0" width="24" height="30" rx="2" fill="#6a7686"/><rect x="3" y="3" width="18" height="5.500" fill="#3fd0f7"/><g fill="#dfe3e8"><rect x="3" y="10.500" width="5" height="4.500"/><rect x="9.500" y="10.500" width="5" height="4.500"/><rect x="16" y="10.500" width="5" height="4.500"/><rect x="3" y="16.500" width="5" height="4.500"/><rect x="9.500" y="16.500" width="5" height="4.500"/><rect x="3" y="22.500" width="5" height="4.500"/><rect x="9.500" y="22.500" width="5" height="4.500"/></g><rect x="16" y="16.500" width="5" height="10.500" fill="#0f4fa8"/></svg>
<svg class="a" style="left:1193px;top:1034px" width="30" height="30" viewBox="0 0 30 30"><g stroke="#111" stroke-width="1"><rect x="14.300" y=".6" width="11.800" height="9.600" rx="1" fill="#e8e8e8"/><rect x="16" y="2.300" width="8.400" height="6.200" fill="#1212dc"/><path d="M17 10.500H29.500L28 16H17z" fill="#e8e8e8"/><rect x="3" y="14.300" width="12.400" height="9.600" rx="1" fill="#e8e8e8"/><rect x="4.700" y="16" width="9" height="6.200" fill="#1212dc"/><path d="M.8 24H19L17.500 29.300H.8z" fill="#e8e8e8"/></g><path d="M24 4.500L12.500 12.500H17.500L7.500 21 19.500 14H14.500z" fill="#fff01e" stroke="#b09a00" stroke-width=".5"/></svg>
<svg class="a" style="left:1248px;top:1037px" width="30" height="24" viewBox="0 0 30 24"><rect x=".8" y=".8" width="28.400" height="16.500" fill="#fff" stroke="#a9a9a9" stroke-width="1.600"/><rect x="12" y="18" width="6" height="3" fill="#8a8a8a"/><rect x="8" y="21" width="14" height="2" fill="#8a8a8a"/><path d="M11.500 6v2.500M18.500 6v2.500M11 11c2 2.500 6 2.500 8 0" stroke="#9a9a9a" stroke-width="1" fill="none"/></svg>
<svg class="a" style="left:1600px;top:1042px" width="16" height="12" viewBox="0 0 16 12"><path d="M1.500 9.500L8 3l6.500 6.500" stroke="#fff" stroke-width="1.800" fill="none"/></svg>
<div class="a t" style="top:1039px;line-height:20px;letter-spacing:-0.974px;font-size:14.5px;color:#fff;left:1641.5px;">ENG</div>
<svg class="a" style="left:1692px;top:1040px" width="22" height="18" viewBox="0 0 22 18"><g fill="none" stroke="#fff" stroke-width="1.600" stroke-linecap="round"><path d="M1.500 6.500a13.500 13.500 0 0 1 19 0"/><path d="M4.500 9.800a9.300 9.300 0 0 1 13 0"/><path d="M7.500 13a5 5 0 0 1 7 0"/></g><circle cx="11" cy="15.500" r="1.500" fill="#fff"/></svg>
<svg class="a" style="left:1722px;top:1040px" width="22" height="18" viewBox="0 0 22 18"><path d="M1.500 6.500h3.500L9.500 2.500v13L5 11.500H1.500z" fill="none" stroke="#fff" stroke-width="1.400" stroke-linejoin="round"/><path d="M12.500 6a4.500 4.500 0 0 1 0 6" fill="none" stroke="#fff" stroke-width="1.400"/><path d="M15 3.500a8 8 0 0 1 0 11" fill="none" stroke="#8a93a5" stroke-width="1.400"/><path d="M17.500 1.500a11 11 0 0 1 0 15" fill="none" stroke="#5f6a80" stroke-width="1.400"/></svg>
<svg class="a" style="left:1752px;top:1040px" width="22" height="18" viewBox="0 0 22 18"><rect x="1.500" y="5" width="16" height="10" rx="2.500" fill="none" stroke="#fff" stroke-width="1.500"/><rect x="3.500" y="7" width="12" height="6" rx="1" fill="#fff"/><path d="M18.500 8.500v3" stroke="#fff" stroke-width="2" stroke-linecap="round"/><path d="M5.500 1l-2 5h3l-2 4" fill="none" stroke="#fff" stroke-width="1.300"/></svg>
<div class="a t" style="top:1028px;line-height:20px;letter-spacing:-0.259px;font-size:14.5px;color:#fff;left:1830px;">12:48</div>
<div class="a t" style="top:1049px;line-height:20px;letter-spacing:-0.158px;font-size:14.5px;color:#fff;left:1794px;">26.10.2025</div>
<svg class="a" style="left:1874px;top:1039px" width="22" height="22" viewBox="0 0 22 22"><path d="M4 16.500V10a7 7 0 0 1 8-7M4 16.500H2.500M4 16.500h14V13" fill="none" stroke="#fff" stroke-width="1.500" stroke-linejoin="round"/><path d="M8.500 18.500a2.500 2.500 0 0 0 5 0" fill="none" stroke="#fff" stroke-width="1.500"/><path d="M13 4h4l-4 4.500h4" fill="none" stroke="#fff" stroke-width="1.200"/><path d="M17 9.500h2.500L17 12.500h2.500" fill="none" stroke="#fff" stroke-width="1"/></svg>
</body>
</html>
